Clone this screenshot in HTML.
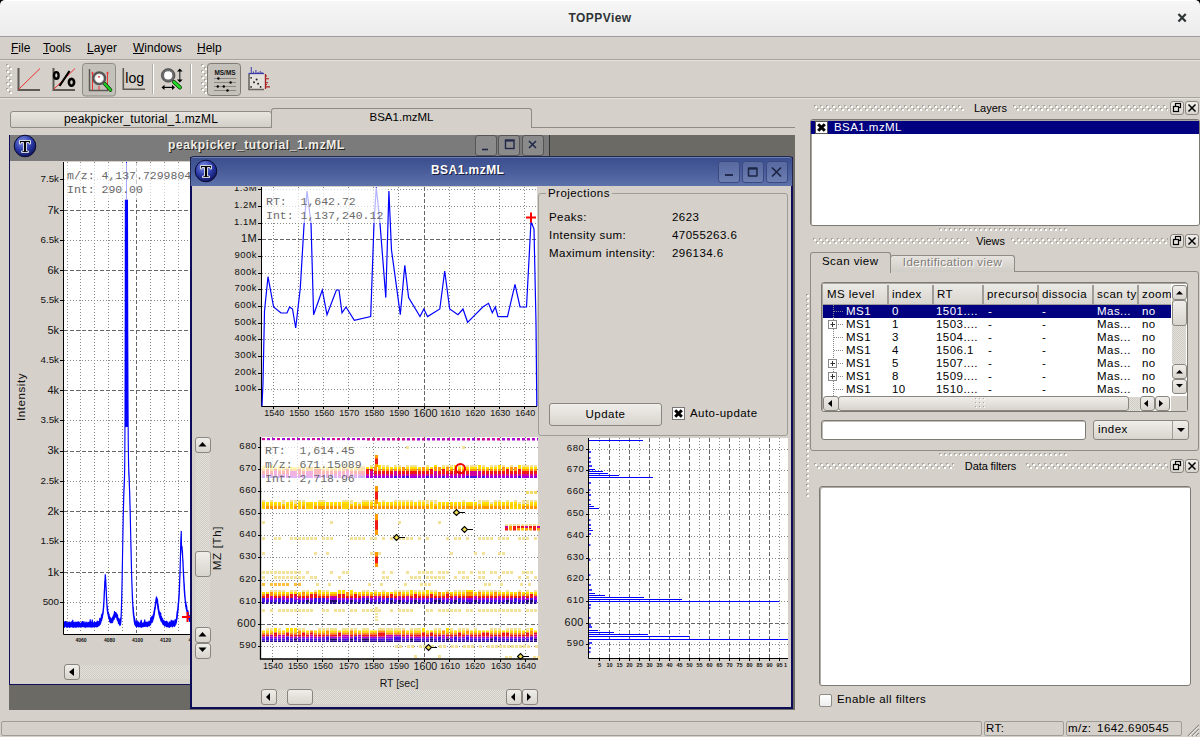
<!DOCTYPE html>
<html><head><meta charset="utf-8">
<style>
*{margin:0;padding:0;box-sizing:border-box}
html,body{width:1200px;height:737px;overflow:hidden;background:#d5d0ca;font-family:"Liberation Sans",sans-serif;font-size:11px;color:#000}
.a{position:absolute}
.t{position:absolute;white-space:nowrap;line-height:1;letter-spacing:0.45px}
.mono{letter-spacing:0}
.mono{font-family:"Liberation Mono",monospace}
.btn{position:absolute;border:1px solid #8a867f;border-radius:3px;background:linear-gradient(#f0eeea,#d8d4ce)}
.dots{position:absolute;background-image:radial-gradient(circle at 1px 1px,#fff 0.9px,transparent 1.1px),radial-gradient(circle at 1px 1px,#a9a59e 0.9px,transparent 1.1px);background-size:4px 4px,4px 4px;background-position:0 2px,2px 0}
.hatch{position:absolute;background-color:#e4e1dc;background-image:linear-gradient(45deg,#cfcbc5 25%,transparent 25%,transparent 75%,#cfcbc5 75%),linear-gradient(45deg,#cfcbc5 25%,transparent 25%,transparent 75%,#cfcbc5 75%);background-size:2px 2px;background-position:0 0,1px 1px}
</style></head><body>
<svg class="a" style="left:0;top:0" width="0" height="0"><defs>
<pattern id="d6" width="6" height="6" patternUnits="userSpaceOnUse"><path d="M0 0h2v1h-1v1h-1z M3 3h2v1h-1v1h-1z" fill="#a9a59f"/><path d="M1 1h2v2h-2z M4 4h2v2h-2z" fill="#fff"/></pattern>
<pattern id="d5" width="5" height="5" patternUnits="userSpaceOnUse"><path d="M0 0h2v1h-1v1h-1z" fill="#a9a59f"/><path d="M1 1h2v2h-2z" fill="#fff"/></pattern>
<pattern id="d4" width="4" height="4" patternUnits="userSpaceOnUse"><path d="M0 0h1v1h-1z" fill="#a9a59f"/><path d="M1 1h1v1h-1z" fill="#fff"/></pattern>
</defs></svg>

<!-- Window title bar -->
<div class="a" style="left:0;top:0;width:1200px;height:8px;background:#000"></div>
<div class="a" style="left:0;top:0;width:1200px;height:37px;background:linear-gradient(#f6f6f6,#ececec);border-bottom:1px solid #9c9c9c;border-top:1px solid #fff;border-radius:5px 5px 0 0"></div>
<div class="t" style="left:0;top:12px;width:1200px;text-align:center;font-weight:bold;font-size:12px;color:#2e3436">TOPPView</div>
<svg class="a" style="left:1170px;top:8px" width="24" height="20"><path d="M9.2 6.8 L15 12.8 M15 6.8 L9.2 12.8" stroke="#2e3436" stroke-width="2.2" stroke-linecap="square"/></svg>

<!-- menubar -->
<div class="a" style="left:0;top:59px;width:1200px;height:1px;background:#a6a29c"></div>
<div class="a" style="left:0;top:60px;width:1200px;height:1px;background:#e6e3de"></div>
<div class="t" style="left:11px;top:42px;font-size:12px;letter-spacing:0"><u>F</u>ile</div>
<div class="t" style="left:43px;top:42px;font-size:12px;letter-spacing:0"><u>T</u>ools</div>
<div class="t" style="left:87px;top:42px;font-size:12px;letter-spacing:0"><u>L</u>ayer</div>
<div class="t" style="left:133px;top:42px;font-size:12px;letter-spacing:0"><u>W</u>indows</div>
<div class="t" style="left:197px;top:42px;font-size:12px;letter-spacing:0"><u>H</u>elp</div>

<!-- toolbar -->
<div class="a" style="left:0;top:97px;width:1200px;height:1px;background:#a6a29c"></div>
<div class="a" style="left:0;top:98px;width:1200px;height:1px;background:#e6e3de"></div>


<!-- toolbar icons -->
<svg class="a" style="left:6px;top:64px" width="6" height="30" shape-rendering="crispEdges"><rect width="6" height="30" fill="url(#d6)"/></svg>
<svg class="a" style="left:0;top:0" width="280" height="100" viewBox="0 0 280 100">
  <!-- icon1 linear -->
  <path d="M18.5 68 V90 H40" fill="none" stroke="#5e5a55" stroke-width="2"/>
  <path d="M18.5 89.5 L40 68.5" stroke="#ee3030" stroke-width="1"/>
  <!-- icon2 percent -->
  <path d="M53.5 68 V90 H75" fill="none" stroke="#5e5a55" stroke-width="2"/>
  <path d="M53.5 89.5 L75 68.5" stroke="#ee3030" stroke-width="1"/>
  <ellipse cx="56.3" cy="75.4" rx="2.3" ry="3.3" fill="none" stroke="#000" stroke-width="2.4"/>
  <ellipse cx="71.5" cy="82.3" rx="2.6" ry="3.4" fill="none" stroke="#000" stroke-width="2.6"/>
  <path d="M59.5 86 L69.5 71" stroke="#000" stroke-width="2.2"/>
  <!-- icon3 pressed button -->
  <rect x="82.5" y="63.5" width="33" height="32.5" rx="3" fill="#c4c0ba" stroke="#8f8b85"/>
  <path d="M89.5 69 V90.5 H108" fill="none" stroke="#5e5a55" stroke-width="1.5"/>
  <path d="M92.5 72.5 V90 M107.5 72.5 V90 M99 86 V90" stroke="#ee3030" stroke-width="1"/>
  <path d="M91 73.5 L92.5 71.5 L94 73.5Z M106 73.5 L107.5 71.5 L109 73.5Z" fill="#ee3030"/>
  <path d="M104.5 83.5 L110.5 90" stroke="#003300" stroke-width="3.6" stroke-linecap="round"/>
  <path d="M104.5 83.5 L110.5 90" stroke="#22cc22" stroke-width="2.4" stroke-linecap="round"/>
  <circle cx="99.2" cy="78.3" r="5.8" fill="#fff" stroke="#555" stroke-width="2.4"/>
  <circle cx="99.2" cy="78.3" r="4.4" fill="none" stroke="#aaa" stroke-width="0.6"/>
  <circle cx="99" cy="76.8" r="0.9" fill="#cc2020"/>
  <!-- icon4 log -->
  <path d="M123.3 68 V89.2 H145" fill="none" stroke="#5e5a55" stroke-width="1.6"/>
  <text x="125.3" y="83.4" font-family="Liberation Sans" font-size="14" fill="#000">log</text>
  <!-- separator -->
  <path d="M152.5 64 V94" stroke="#b0aca6" stroke-width="1"/><path d="M153.5 64 V94" stroke="#fff" stroke-width="1"/>
  <!-- icon5 zoom -->
  <path d="M174 82 L180 87.5" stroke="#003300" stroke-width="3.8" stroke-linecap="round"/>
  <path d="M174 82 L180 87.5" stroke="#22dd22" stroke-width="2.4" stroke-linecap="round"/>
  <circle cx="168.2" cy="75.4" r="5.5" fill="#fff" stroke="#6a6a6a" stroke-width="2.8"/>
  <circle cx="168.2" cy="75.4" r="6.8" fill="none" stroke="#333" stroke-width="0.6"/>
  <path d="M179.8 70.5 V80.5" stroke="#333" stroke-width="1.2"/>
  <path d="M177 71.5 L179.8 68.5 L182.6 71.5Z M177 79.5 L179.8 82.5 L182.6 79.5Z" fill="#000"/>
  <path d="M163 87.4 H173.5" stroke="#000" stroke-width="1.2"/>
  <path d="M164.5 84.8 L161.5 87.4 L164.5 90Z M172 84.8 L175 87.4 L172 90Z" fill="#000"/>
  <path d="M190.5 64 V94" stroke="#b0aca6" stroke-width="1"/><path d="M191.5 64 V94" stroke="#fff" stroke-width="1"/>
  <!-- icon6 MS/MS -->
  <rect x="207.5" y="63.5" width="33" height="32" rx="3" fill="#c4c0ba" stroke="#7f7b75"/>
  <text x="214.5" y="75.3" font-family="Liberation Sans" font-weight="bold" font-size="6.8" textLength="21" lengthAdjust="spacingAndGlyphs" fill="#111">MS/MS</text>
  <path d="M214 78.5 H236 M214 82.5 H236 M214 86.5 H236 M214 90.5 H236" stroke="#8a8680" stroke-width="1"/>
  <g fill="#000"><circle cx="218.4" cy="78.5" r="1.2"/><circle cx="230.6" cy="82.5" r="1.2"/><circle cx="217.8" cy="86.5" r="1.2"/><circle cx="223.8" cy="86.5" r="1.2"/><circle cx="227.5" cy="90.5" r="1.2"/></g>
  <!-- icon7 -->
  <rect x="248.5" y="74.5" width="15.5" height="15" fill="#e4e1dc"/>
  <path d="M249 74 V89.5 H264" fill="none" stroke="#6a6661" stroke-width="1.6"/>
  <path d="M248.5 73.5 H264" stroke="#3a3aaa" stroke-width="1.2"/>
  <path d="M251.3 73 V67 M253.5 73 V71.5 M255.9 73 V70 M258 73 V72 M260.2 73 V71 M262 73 V72" stroke="#4a4ab0" stroke-width="1.1"/>
  <path d="M265.5 74 V89" stroke="#aa2020" stroke-width="1.2"/>
  <path d="M265.5 78.7 H269 M265.5 82.8 H268 M265.5 86.9 H270 M265.5 76 H267 M265.5 84.5 H267" stroke="#aa2020" stroke-width="1.1"/>
  <g fill="#222"><circle cx="251.1" cy="77.8" r="0.9"/><circle cx="256.6" cy="79.4" r="1"/><circle cx="254" cy="82.2" r="1"/><circle cx="258.1" cy="83.8" r="1"/><circle cx="251.1" cy="86.9" r="0.9"/><circle cx="260.6" cy="86.9" r="0.9"/></g>
</svg>
<svg class="a" style="left:201px;top:64px" width="6" height="30" shape-rendering="crispEdges"><rect width="6" height="30" fill="url(#d6)"/></svg>

<!-- tab bar -->
<div class="a" style="left:10px;top:111px;width:262px;height:17px;border:1px solid #8f8b85;border-radius:3px 3px 2px 2px;background:linear-gradient(#e8e5e0,#d2cec8)"></div>
<div class="t" style="left:10px;top:113px;width:262px;text-align:center;font-size:12px;letter-spacing:0.15px">peakpicker_tutorial_1.mzML</div>
<div class="a" style="left:271px;top:108px;width:261px;height:20px;border:1px solid #8f8b85;border-bottom:none;border-radius:3px 3px 0 0;background:#d5d0ca"></div>
<div class="t" style="left:271px;top:112px;width:261px;text-align:center;font-size:11.5px;letter-spacing:0">BSA1.mzML</div>
<div class="a" style="left:531px;top:127px;width:264px;height:1px;background:#8f8b85"></div>

<!-- MDI area -->
<div class="a" style="left:9px;top:135px;width:786px;height:575px;background:#6b6a65"></div>


<!-- peakpicker window -->
<div class="a" style="left:9px;top:135px;width:541px;height:550px;background:#d5d0ca;border:1px solid #10105a;border-top:none"></div>
<div class="a" style="left:10px;top:135px;width:539px;height:26px;background:#7b7b7b"></div>
<svg class="a" style="left:13px;top:134px" width="24" height="24" viewBox="0 0 24 24">
 <defs><radialGradient id="tg" cx="0.4" cy="0.3" r="0.7"><stop offset="0" stop-color="#7f8fe0"/><stop offset="0.6" stop-color="#2a3aa8"/><stop offset="1" stop-color="#101860"/></radialGradient></defs>
 <circle cx="12" cy="12" r="10.8" fill="url(#tg)" stroke="#0a0a30" stroke-width="1"/>
 <path d="M6.5 6.5 H17.5 V10 H16 V8.5 H13.5 V17 H15.5 V18.5 H8.5 V17 H10.5 V8.5 H8 V10 H6.5 Z" fill="#000" stroke="#fff" stroke-width="0.8"/>
</svg>
<div class="t" style="left:168px;top:139px;font-weight:bold;font-size:12px;letter-spacing:0.62px;color:#f0ede6;text-shadow:1px 1px 0 #222">peakpicker_tutorial_1.mzML</div>
<div class="a" style="left:475px;top:135px;width:22px;height:21px;background:#8b8b8b;border:1px solid #555;border-radius:3px"></div>
<div class="a" style="left:498px;top:135px;width:22px;height:21px;background:#8b8b8b;border:1px solid #555;border-radius:3px"></div>
<div class="a" style="left:522px;top:135px;width:22px;height:21px;background:#8b8b8b;border:1px solid #555;border-radius:3px"></div>
<svg class="a" style="left:475px;top:135px" width="70" height="22" viewBox="0 0 70 22">
 <path d="M7 14.5 H13" stroke="#20284a" stroke-width="1.6"/>
 <rect x="30.5" y="5" width="8.5" height="8.5" fill="none" stroke="#20284a" stroke-width="1.4"/>
 <path d="M30.5 5.8 H39" stroke="#20284a" stroke-width="1.5"/>
 <path d="M54 6 L61 13 M61 6 L54 13" stroke="#20284a" stroke-width="1.5"/>
</svg>
<div class="a" style="left:549px;top:135px;width:1px;height:26px;background:#333"></div>

<!-- peakpicker plot -->
<div class="a" style="left:64px;top:162px;width:130px;height:472px;background:#fff"></div>
<svg class="a" style="left:0;top:0" width="195" height="700" viewBox="0 0 195 700">
 <defs><clipPath id="ppclip"><rect x="64" y="199" width="131" height="435"/></clipPath></defs>
 <g stroke="#888" stroke-width="1" stroke-dasharray="1 2">
  <path d="M67.5 162 V633 M80.5 162 V633 M94.5 162 V633 M108.5 162 V633 M122.5 162 V633 M150.5 162 V633 M164.5 162 V633 M178.5 162 V633"/>
  <path d="M64 179.5 H195 M64 240.5 H195 M64 300.5 H195 M64 360.5 H195 M64 420.5 H195 M64 481.5 H195 M64 541.5 H195 M64 602.5 H195"/>
 </g>
 <g stroke="#666" stroke-width="1" stroke-dasharray="4 2">
  <path d="M136.5 162 V633"/>
  <path d="M64 210.5 H195 M64 270.5 H195 M64 330.5 H195 M64 390.5 H195 M64 451.5 H195 M64 511.5 H195 M64 572.5 H195"/>
 </g>
 <path d="M63.5 162 V634.5 H195" fill="none" stroke="#000" stroke-width="1"/>
 <g stroke="#000" stroke-width="1">
  <path d="M60 179.5 H63 M60 210.5 H63 M60 240.5 H63 M60 270.5 H63 M60 300.5 H63 M60 330.5 H63 M60 360.5 H63 M60 390.5 H63 M60 420.5 H63 M60 451.5 H63 M60 481.5 H63 M60 511.5 H63 M60 541.5 H63 M60 572.5 H63 M60 602.5 H63"/>
 </g>
 <g font-family="Liberation Sans" font-size="11" text-anchor="end" fill="#111">
  <text x="59" y="214">7k</text><text x="59" y="274">6k</text><text x="59" y="334">5k</text><text x="59" y="394">4k</text><text x="59" y="454">3k</text><text x="59" y="515">2k</text><text x="59" y="576">1k</text>
 </g>
 <g font-family="Liberation Sans" font-size="9.8" text-anchor="end" fill="#111">
  <text x="59" y="181.5">7.5k</text><text x="59" y="242.5">6.5k</text><text x="59" y="302.5">5.5k</text><text x="59" y="362.5">4.5k</text><text x="59" y="422.5">3.5k</text><text x="59" y="483.5">2.5k</text><text x="59" y="543.5">1.5k</text><text x="59" y="604.5">500</text>
 </g>
 <text x="0" y="0" transform="translate(25 397) rotate(-90)" text-anchor="middle" font-family="Liberation Sans" font-size="11.5" letter-spacing="0.6" fill="#111">Intensity</text>
 <g font-family="Liberation Sans" font-size="5" text-anchor="middle" fill="#111" font-weight="bold">
  <text x="81" y="642">4060</text><text x="109.5" y="642">4080</text><text x="137.5" y="642">4100</text><text x="165.5" y="642">4120</text><text x="190" y="642">4</text>
 </g>
 <g clip-path="url(#ppclip)"><path fill="#0000ff" stroke="#0000ff" stroke-width="1.1" stroke-linejoin="bevel" d="M64.00 622.5 L64.25 621.7 L64.50 624.1 L64.75 622.4 L65.00 622.9 L65.25 621.2 L65.50 621.7 L65.75 622.0 L66.00 621.1 L66.25 623.6 L66.50 623.4 L66.75 622.4 L67.00 622.3 L67.25 623.4 L67.50 622.2 L67.75 624.2 L68.00 623.4 L68.25 623.3 L68.50 624.0 L68.75 622.2 L69.00 622.1 L69.25 622.8 L69.50 623.7 L69.75 621.7 L70.00 622.8 L70.25 622.2 L70.50 624.1 L70.75 623.3 L71.00 623.3 L71.25 623.4 L71.50 624.0 L71.75 621.5 L72.00 621.5 L72.25 623.6 L72.50 623.0 L72.75 619.7 L73.00 623.8 L73.25 622.5 L73.50 623.0 L73.75 623.4 L74.00 621.9 L74.25 622.9 L74.50 623.4 L74.75 623.2 L75.00 622.5 L75.25 624.0 L75.50 621.9 L75.75 622.1 L76.00 622.1 L76.25 623.4 L76.50 622.3 L76.75 622.4 L77.00 622.7 L77.25 623.0 L77.50 622.0 L77.75 622.2 L78.00 621.9 L78.25 621.6 L78.50 622.8 L78.75 621.7 L79.00 622.3 L79.25 622.1 L79.50 623.1 L79.75 622.5 L80.00 623.8 L80.25 623.6 L80.50 624.1 L80.75 624.1 L81.00 623.7 L81.25 622.9 L81.50 622.6 L81.75 624.2 L82.00 623.1 L82.25 621.0 L82.50 622.7 L82.75 621.6 L83.00 622.0 L83.25 623.8 L83.50 621.6 L83.75 623.3 L84.00 623.9 L84.25 623.8 L84.50 623.2 L84.75 623.4 L85.00 621.6 L85.25 623.5 L85.50 623.1 L85.75 622.9 L86.00 623.9 L86.25 623.4 L86.50 624.2 L86.75 621.7 L87.00 623.5 L87.25 623.4 L87.50 622.5 L87.75 623.9 L88.00 622.8 L88.25 622.8 L88.50 622.2 L88.75 623.5 L89.00 621.8 L89.25 622.1 L89.50 622.3 L89.75 621.7 L90.00 621.9 L90.25 619.3 L90.50 623.0 L90.75 621.7 L91.00 622.7 L91.25 623.8 L91.50 624.0 L91.75 622.1 L92.00 622.2 L92.25 619.6 L92.50 622.5 L92.75 623.8 L93.00 623.8 L93.25 623.8 L93.50 623.9 L93.75 624.0 L94.00 621.8 L94.25 623.3 L94.50 621.7 L94.75 622.3 L95.00 622.8 L95.25 622.5 L95.50 623.5 L95.75 623.8 L96.00 622.2 L96.25 622.4 L96.50 623.9 L96.75 623.4 L97.00 623.2 L97.25 620.7 L97.50 622.1 L97.75 621.2 L98.00 623.3 L98.25 623.0 L98.50 622.5 L98.75 621.0 L99.00 621.9 L99.25 621.2 L99.50 621.4 L99.75 618.8 L100.00 617.8 L100.25 619.7 L100.50 620.6 L100.75 619.3 L101.00 619.3 L101.25 618.6 L101.50 614.2 L101.75 615.0 L102.00 615.4 L102.25 614.0 L102.50 612.8 L102.75 613.5 L103.00 611.0 L103.25 609.2 L103.50 605.4 L103.75 603.1 L104.00 597.5 L104.25 591.5 L104.50 588.5 L104.75 582.3 L105.00 579.8 L105.25 574.3 L105.50 576.3 L105.75 579.7 L106.00 585.5 L106.25 589.7 L106.50 596.1 L106.75 599.4 L107.00 604.8 L107.25 606.3 L107.50 608.1 L107.75 610.5 L108.00 612.6 L108.25 611.9 L108.50 614.6 L108.75 615.6 L109.00 613.6 L109.25 616.9 L109.50 617.9 L109.75 616.7 L110.00 617.6 L110.25 618.6 L110.50 617.6 L110.75 619.8 L111.00 619.0 L111.25 619.0 L111.50 618.8 L111.75 620.6 L112.00 618.2 L112.25 619.6 L112.50 616.7 L112.75 617.3 L113.00 618.3 L113.25 615.6 L113.50 616.6 L113.75 615.7 L114.00 613.7 L114.25 614.1 L114.50 611.1 L114.75 613.2 L115.00 613.4 L115.25 613.7 L115.50 612.1 L115.75 613.6 L116.00 612.2 L116.25 614.4 L116.50 615.1 L116.75 613.9 L117.00 614.3 L117.25 614.8 L117.50 614.7 L117.75 618.0 L118.00 619.1 L118.25 618.6 L118.50 617.9 L118.75 619.2 L119.00 619.5 L119.25 620.3 L119.50 622.3 L119.75 621.2 L120.00 622.1 L120.25 618.3 L120.50 619.4 L120.75 618.2 L121.00 616.9 L121.25 612.1 L121.50 603.0 L121.75 594.8 L122.00 583.4 L122.25 569.9 L122.50 556.4 L122.75 542.0 L123.00 526.4 L123.25 514.0 L123.50 503.5 L123.75 493.9 L124.00 487.2 L124.25 482.1 L124.50 475.0 L124.75 461.7 L125.00 421.0 L125.25 312.3 L125.50 103.9 L125.75 -189.0 L126.00 -449.3 L126.25 -524.8 L126.50 -455.5 L126.75 -306.5 L127.00 -119.4 L127.25 66.9 L127.50 220.9 L127.75 333.1 L128.00 400.6 L128.25 439.8 L128.50 458.6 L128.75 468.7 L129.00 473.5 L129.25 479.7 L129.50 487.7 L129.75 493.6 L130.00 503.7 L130.25 512.4 L130.50 524.6 L130.75 536.8 L131.00 545.0 L131.25 558.1 L131.50 568.6 L131.75 577.8 L132.00 584.6 L132.25 592.6 L132.50 596.0 L132.75 602.2 L133.00 606.4 L133.25 607.1 L133.50 611.7 L133.75 613.4 L134.00 617.0 L134.25 616.3 L134.50 618.9 L134.75 618.6 L135.00 620.7 L135.25 621.9 L135.50 621.8 L135.75 623.1 L136.00 623.5 L136.25 621.4 L136.50 621.7 L136.75 623.7 L137.00 620.2 L137.25 623.4 L137.50 622.1 L137.75 621.5 L138.00 623.9 L138.25 623.2 L138.50 621.6 L138.75 623.5 L139.00 623.8 L139.25 624.2 L139.50 622.8 L139.75 624.0 L140.00 623.2 L140.25 623.4 L140.50 621.7 L140.75 622.3 L141.00 621.5 L141.25 619.8 L141.50 622.8 L141.75 623.4 L142.00 623.8 L142.25 622.7 L142.50 624.0 L142.75 623.8 L143.00 623.5 L143.25 623.5 L143.50 623.1 L143.75 623.5 L144.00 621.8 L144.25 624.0 L144.50 621.5 L144.75 619.6 L145.00 622.2 L145.25 623.6 L145.50 624.0 L145.75 623.9 L146.00 621.7 L146.25 622.3 L146.50 622.0 L146.75 624.0 L147.00 621.5 L147.25 623.3 L147.50 623.3 L147.75 623.6 L148.00 622.0 L148.25 622.3 L148.50 622.0 L148.75 622.7 L149.00 620.8 L149.25 622.0 L149.50 622.1 L149.75 621.8 L150.00 620.8 L150.25 621.9 L150.50 621.7 L150.75 617.2 L151.00 619.6 L151.25 619.9 L151.50 620.4 L151.75 616.3 L152.00 617.2 L152.25 617.9 L152.50 616.0 L152.75 617.9 L153.00 615.0 L153.25 614.8 L153.50 615.8 L153.75 613.9 L154.00 611.3 L154.25 611.2 L154.50 609.4 L154.75 607.2 L155.00 607.3 L155.25 604.4 L155.50 602.3 L155.75 601.3 L156.00 599.0 L156.25 597.8 L156.50 596.6 L156.75 599.2 L157.00 597.9 L157.25 601.0 L157.50 599.4 L157.75 602.4 L158.00 604.5 L158.25 605.4 L158.50 607.1 L158.75 609.7 L159.00 610.3 L159.25 613.1 L159.50 611.7 L159.75 612.6 L160.00 613.6 L160.25 614.5 L160.50 612.8 L160.75 613.0 L161.00 617.5 L161.25 616.1 L161.50 617.1 L161.75 618.7 L162.00 618.0 L162.25 618.9 L162.50 618.6 L162.75 619.0 L163.00 621.2 L163.25 620.3 L163.50 621.7 L163.75 620.1 L164.00 622.4 L164.25 621.1 L164.50 621.0 L164.75 623.1 L165.00 621.0 L165.25 622.4 L165.50 623.5 L165.75 621.7 L166.00 621.2 L166.25 623.2 L166.50 620.9 L166.75 622.1 L167.00 621.9 L167.25 621.9 L167.50 622.3 L167.75 622.9 L168.00 623.4 L168.25 623.6 L168.50 623.2 L168.75 623.2 L169.00 624.1 L169.25 621.8 L169.50 621.9 L169.75 624.0 L170.00 624.0 L170.25 622.9 L170.50 621.7 L170.75 623.7 L171.00 622.0 L171.25 619.9 L171.50 622.4 L171.75 622.2 L172.00 621.8 L172.25 622.3 L172.50 623.9 L172.75 620.3 L173.00 622.8 L173.25 620.4 L173.50 623.1 L173.75 621.3 L174.00 622.8 L174.25 622.7 L174.50 622.2 L174.75 622.4 L175.00 619.2 L175.25 622.0 L175.50 621.3 L175.75 620.1 L176.00 619.3 L176.25 619.7 L176.50 618.2 L176.75 616.1 L177.00 613.0 L177.25 610.8 L177.50 611.6 L177.75 608.9 L178.00 605.9 L178.25 602.8 L178.50 601.8 L178.75 597.4 L179.00 594.5 L179.25 588.8 L179.50 583.4 L179.75 577.7 L180.00 571.5 L180.25 562.0 L180.50 552.4 L180.75 541.0 L181.00 536.3 L181.25 530.9 L181.50 545.8 L181.75 546.1 L182.00 546.4 L182.25 550.2 L182.50 551.7 L182.75 558.1 L183.00 560.4 L183.25 568.0 L183.50 571.4 L183.75 576.4 L184.00 581.2 L184.25 584.6 L184.50 589.1 L184.75 592.3 L185.00 596.0 L185.25 599.3 L185.50 601.8 L185.75 601.2 L186.00 603.3 L186.25 605.6 L186.50 605.5 L186.75 606.3 L187.00 609.9 L187.25 610.3 L187.50 611.1 L187.75 610.2 L188.00 611.7 L188.25 612.1 L188.50 615.1 L188.75 614.6 L189.00 615.9 L189.25 615.3 L189.50 616.6 L189.75 618.1 L190.00 617.7 L190.00 621.7 L189.75 621.4 L189.50 620.2 L189.25 620.0 L189.00 619.2 L188.75 618.9 L188.50 617.5 L188.25 617.1 L188.00 615.9 L187.75 615.2 L187.50 613.5 L187.25 613.4 L187.00 611.7 L186.75 610.7 L186.50 609.7 L186.25 609.2 L186.00 607.3 L185.75 606.8 L185.50 604.1 L185.25 601.6 L185.00 599.0 L184.75 596.8 L184.50 594.2 L184.25 590.6 L184.00 586.0 L183.75 580.1 L183.50 576.4 L183.25 571.5 L183.00 564.8 L182.75 559.8 L182.50 556.0 L182.25 553.6 L182.00 550.1 L181.75 547.9 L181.50 549.1 L181.25 535.1 L181.00 539.4 L180.75 547.1 L180.50 555.8 L180.25 565.6 L180.00 575.1 L179.75 581.6 L179.50 588.9 L179.25 594.3 L179.00 598.7 L178.75 602.2 L178.50 604.2 L178.25 608.1 L178.00 610.7 L177.75 612.1 L177.50 613.8 L177.25 617.0 L177.00 619.0 L176.75 619.9 L176.50 621.5 L176.25 623.1 L176.00 623.1 L175.75 624.3 L175.50 625.2 L175.25 625.0 L175.00 624.9 L174.75 625.5 L174.50 626.5 L174.25 626.3 L174.00 625.2 L173.75 625.4 L173.50 625.8 L173.25 625.8 L173.00 625.9 L172.75 626.3 L172.50 627.2 L172.25 626.5 L172.00 626.1 L171.75 626.1 L171.50 625.6 L171.25 625.9 L171.00 626.1 L170.75 626.4 L170.50 626.6 L170.25 626.4 L170.00 627.0 L169.75 625.5 L169.50 627.3 L169.25 627.4 L169.00 626.3 L168.75 626.0 L168.50 626.6 L168.25 627.1 L168.00 626.9 L167.75 626.0 L167.50 626.8 L167.25 626.6 L167.00 627.1 L166.75 626.6 L166.50 626.7 L166.25 626.0 L166.00 626.4 L165.75 625.3 L165.50 625.4 L165.25 625.2 L165.00 624.8 L164.75 626.4 L164.50 625.5 L164.25 625.3 L164.00 625.3 L163.75 624.6 L163.50 624.2 L163.25 624.5 L163.00 624.3 L162.75 623.7 L162.50 623.1 L162.25 622.1 L162.00 622.6 L161.75 620.7 L161.50 621.4 L161.25 621.3 L161.00 621.1 L160.75 619.6 L160.50 619.6 L160.25 617.8 L160.00 618.3 L159.75 616.8 L159.50 616.2 L159.25 615.1 L159.00 614.8 L158.75 612.4 L158.50 611.6 L158.25 609.8 L158.00 609.2 L157.75 606.9 L157.50 604.3 L157.25 603.1 L157.00 602.9 L156.75 602.0 L156.50 601.0 L156.25 601.2 L156.00 602.3 L155.75 604.8 L155.50 606.5 L155.25 608.0 L155.00 609.7 L154.75 610.9 L154.50 613.0 L154.25 614.7 L154.00 615.7 L153.75 617.5 L153.50 618.4 L153.25 619.2 L153.00 619.1 L152.75 621.4 L152.50 620.6 L152.25 621.4 L152.00 622.9 L151.75 621.9 L151.50 622.7 L151.25 622.5 L151.00 623.2 L150.75 623.8 L150.50 625.0 L150.25 624.2 L150.00 625.7 L149.75 624.6 L149.50 624.8 L149.25 626.1 L149.00 625.9 L148.75 625.8 L148.50 625.1 L148.25 625.8 L148.00 625.3 L147.75 626.4 L147.50 625.9 L147.25 627.1 L147.00 625.6 L146.75 626.4 L146.50 626.0 L146.25 625.6 L146.00 625.5 L145.75 626.7 L145.50 625.6 L145.25 625.7 L145.00 626.7 L144.75 625.7 L144.50 626.5 L144.25 626.6 L144.00 625.8 L143.75 626.4 L143.50 626.0 L143.25 626.7 L143.00 627.0 L142.75 626.0 L142.50 626.2 L142.25 626.4 L142.00 626.5 L141.75 627.2 L141.50 627.3 L141.25 627.0 L141.00 625.8 L140.75 627.4 L140.50 626.6 L140.25 626.8 L140.00 625.5 L139.75 625.6 L139.50 627.1 L139.25 626.3 L139.00 626.9 L138.75 627.0 L138.50 626.6 L138.25 626.7 L138.00 626.2 L137.75 625.7 L137.50 626.5 L137.25 626.2 L137.00 626.3 L136.75 627.2 L136.50 626.5 L136.25 625.2 L136.00 626.7 L135.75 625.6 L135.50 625.7 L135.25 624.4 L135.00 625.2 L134.75 623.9 L134.50 622.8 L134.25 621.8 L134.00 619.2 L133.75 616.5 L133.50 616.0 L133.25 613.1 L133.00 609.8 L132.75 604.8 L132.50 602.1 L132.25 595.4 L132.00 588.0 L131.75 580.1 L131.50 571.1 L131.25 561.8 L131.00 549.9 L130.75 538.7 L130.50 527.8 L130.25 516.4 L130.00 507.2 L129.75 497.7 L129.50 490.1 L129.25 483.6 L129.00 477.5 L128.75 472.0 L128.50 462.1 L128.25 442.4 L128.00 404.6 L127.75 335.3 L127.50 225.0 L127.25 71.9 L127.00 -114.5 L126.75 -303.5 L126.50 -452.8 L126.25 -522.9 L126.00 -445.2 L125.75 -185.5 L125.50 109.5 L125.25 319.2 L125.00 425.3 L124.75 465.0 L124.50 479.2 L124.25 486.1 L124.00 490.5 L123.75 498.0 L123.50 508.0 L123.25 517.5 L123.00 531.4 L122.75 545.4 L122.50 559.2 L122.25 574.5 L122.00 586.5 L121.75 599.7 L121.50 607.5 L121.25 615.1 L121.00 620.6 L120.75 622.9 L120.50 624.7 L120.25 625.4 L120.00 624.7 L119.75 625.5 L119.50 624.5 L119.25 624.0 L119.00 624.1 L118.75 623.5 L118.50 623.7 L118.25 622.0 L118.00 621.3 L117.75 620.4 L117.50 620.3 L117.25 620.0 L117.00 619.1 L116.75 617.5 L116.50 616.7 L116.25 617.1 L116.00 616.6 L115.75 617.2 L115.50 616.2 L115.25 616.2 L115.00 616.3 L114.75 617.8 L114.50 616.5 L114.25 618.6 L114.00 619.5 L113.75 619.7 L113.50 619.7 L113.25 619.7 L113.00 620.9 L112.75 621.6 L112.50 622.7 L112.25 622.2 L112.00 623.0 L111.75 622.7 L111.50 622.2 L111.25 622.3 L111.00 622.6 L110.75 622.6 L110.50 622.9 L110.25 622.4 L110.00 621.8 L109.75 621.9 L109.50 620.1 L109.25 619.5 L109.00 618.1 L108.75 618.3 L108.50 616.8 L108.25 615.9 L108.00 614.4 L107.75 613.4 L107.50 611.9 L107.25 610.4 L107.00 607.1 L106.75 602.8 L106.50 599.5 L106.25 593.1 L106.00 588.1 L105.75 584.9 L105.50 581.0 L105.25 579.7 L105.00 582.3 L104.75 585.2 L104.50 591.9 L104.25 596.2 L104.00 602.5 L103.75 606.9 L103.50 609.0 L103.25 611.9 L103.00 614.1 L102.75 615.0 L102.50 616.5 L102.25 618.5 L102.00 618.2 L101.75 620.2 L101.50 620.3 L101.25 620.8 L101.00 621.5 L100.75 623.4 L100.50 622.5 L100.25 623.6 L100.00 624.9 L99.75 624.4 L99.50 623.9 L99.25 625.6 L99.00 625.4 L98.75 626.2 L98.50 625.0 L98.25 626.1 L98.00 625.7 L97.75 626.8 L97.50 625.4 L97.25 627.2 L97.00 625.4 L96.75 626.3 L96.50 626.6 L96.25 626.8 L96.00 626.9 L95.75 626.2 L95.50 626.5 L95.25 626.6 L95.00 626.6 L94.75 626.8 L94.50 625.6 L94.25 626.5 L94.00 626.4 L93.75 627.0 L93.50 625.6 L93.25 625.6 L93.00 626.3 L92.75 627.3 L92.50 626.9 L92.25 625.9 L92.00 627.5 L91.75 625.6 L91.50 627.1 L91.25 627.1 L91.00 626.2 L90.75 626.5 L90.50 627.1 L90.25 626.9 L90.00 626.1 L89.75 626.3 L89.50 626.5 L89.25 626.7 L89.00 625.5 L88.75 627.3 L88.50 625.6 L88.25 626.2 L88.00 626.1 L87.75 626.1 L87.50 627.0 L87.25 626.4 L87.00 627.5 L86.75 626.0 L86.50 626.0 L86.25 627.2 L86.00 626.4 L85.75 626.5 L85.50 627.5 L85.25 626.5 L85.00 626.7 L84.75 626.3 L84.50 626.0 L84.25 627.3 L84.00 626.7 L83.75 625.5 L83.50 626.7 L83.25 626.6 L83.00 626.2 L82.75 626.3 L82.50 626.7 L82.25 625.7 L82.00 627.2 L81.75 626.1 L81.50 627.3 L81.25 626.7 L81.00 625.6 L80.75 626.1 L80.50 626.0 L80.25 626.8 L80.00 626.8 L79.75 625.6 L79.50 627.0 L79.25 626.8 L79.00 625.8 L78.75 626.9 L78.50 627.2 L78.25 626.5 L78.00 626.9 L77.75 626.2 L77.50 626.8 L77.25 626.8 L77.00 626.8 L76.75 625.5 L76.50 627.4 L76.25 627.0 L76.00 626.9 L75.75 626.8 L75.50 627.1 L75.25 627.1 L75.00 626.2 L74.75 627.4 L74.50 625.8 L74.25 626.5 L74.00 626.4 L73.75 627.5 L73.50 627.2 L73.25 625.7 L73.00 627.4 L72.75 627.2 L72.50 625.6 L72.25 627.2 L72.00 626.3 L71.75 625.6 L71.50 626.9 L71.25 625.9 L71.00 626.6 L70.75 627.3 L70.50 625.7 L70.25 627.2 L70.00 625.7 L69.75 626.2 L69.50 627.4 L69.25 627.4 L69.00 626.7 L68.75 625.5 L68.50 625.5 L68.25 626.9 L68.00 626.5 L67.75 626.2 L67.50 626.7 L67.25 625.8 L67.00 627.3 L66.75 627.4 L66.50 626.6 L66.25 627.2 L66.00 625.9 L65.75 626.7 L65.50 625.8 L65.25 626.1 L65.00 626.6 L64.75 625.7 L64.50 627.4 L64.25 627.3 L64.00 627.1Z"/></g>
 <path d="M126 162 h1 v37 h0.5 v28 h0.5 v200 h-3 v-200 h0.5 v-28 h0.5z" fill="#0000ff"/>
 <path d="M182 617 H193 M187.5 612 V622" stroke="#ff0000" stroke-width="2"/>
</svg>
<div class="t mono" style="left:64px;top:163px;font-size:11.5px;line-height:13.7px;color:#666;background:rgba(255,255,255,0.65);padding:6px 0 4px 3px">m/z: 4,137.7299804<br>Int: 290.00</div>
<!-- peakpicker scrollbar -->
<div class="btn" style="left:64px;top:664px;width:16px;height:16px"></div>
<svg class="a" style="left:64px;top:664px" width="16" height="16"><path d="M5 8 L10 4 V12 Z" fill="#000"/></svg>
<div class="hatch" style="left:80px;top:665px;width:114px;height:14px"></div>


<!-- BSA1 window -->
<div class="a" style="left:190px;top:157px;width:604px;height:553px;background:#6b6a65"></div>
<div class="a" style="left:190px;top:157px;width:603px;height:552px;background:#d5d0ca;border:2px solid #0c0c58;border-top:none;border-right-width:2px"></div>
<div class="a" style="left:190px;top:156px;width:603px;height:30px;background:#23284a;border-radius:4px 4px 0 0"></div>
<div class="a" style="left:191px;top:157px;width:601px;height:29px;background:linear-gradient(#3b4f8f,#4a5e9c 50%,#5d71aa);border-top:1px solid #6c80b8;border-radius:3px 3px 0 0"></div>
<svg class="a" style="left:194px;top:159px" width="24" height="24" viewBox="0 0 24 24">
 <circle cx="12" cy="12" r="10.8" fill="url(#tg)" stroke="#0a0a30" stroke-width="1"/>
 <path d="M6.5 6.5 H17.5 V10 H16 V8.5 H13.5 V17 H15.5 V18.5 H8.5 V17 H10.5 V8.5 H8 V10 H6.5 Z" fill="#000" stroke="#fff" stroke-width="0.8"/>
</svg>
<div class="t" style="left:431px;top:164px;font-weight:bold;font-size:12px;color:#fff;text-shadow:1px 1px 0 #1a1a3a">BSA1.mzML</div>
<div class="a" style="left:718px;top:161px;width:22px;height:22px;background:rgba(255,255,255,0.13);border:1px solid #3a4a80;border-radius:3px"></div>
<div class="a" style="left:742px;top:161px;width:22px;height:22px;background:rgba(255,255,255,0.13);border:1px solid #3a4a80;border-radius:3px"></div>
<div class="a" style="left:766px;top:161px;width:22px;height:22px;background:rgba(255,255,255,0.13);border:1px solid #3a4a80;border-radius:3px"></div>
<svg class="a" style="left:718px;top:161px" width="70" height="22" viewBox="0 0 70 22">
 <path d="M7 14 H15" stroke="#1c2444" stroke-width="1.8"/>
 <rect x="30.5" y="7" width="8.5" height="8" rx="0.5" fill="none" stroke="#1c2444" stroke-width="1.5"/>
 <path d="M30.5 7.8 H39" stroke="#1c2444" stroke-width="1.6"/>
 <path d="M54 6.5 L63 15.5 M63 6.5 L54 15.5" stroke="#1c2444" stroke-width="1.7"/>
</svg>

<!-- upper RT projection plot -->
<div class="a" style="left:262px;top:187px;width:275px;height:219px;background:#fff"></div>
<svg class="a" style="left:190px;top:180px" width="360" height="245" viewBox="190 180 360 245">
 <defs><clipPath id="upclip"><rect x="190" y="187" width="360" height="240"/></clipPath></defs>
 <g stroke="#888" stroke-width="1" stroke-dasharray="1 2">
  <path d="M273.5 187 V406 M298.5 187 V406 M323.5 187 V406 M348.5 187 V406 M373.5 187 V406 M398.5 187 V406 M449.5 187 V406 M474.5 187 V406 M499.5 187 V406 M524.5 187 V406"/>
  <path d="M262 189.5 H537 M262 206.5 H537 M262 223.5 H537 M262 256.5 H537 M262 273.5 H537 M262 289.5 H537 M262 306.5 H537 M262 323.5 H537 M262 339.5 H537 M262 356.5 H537 M262 373.5 H537 M262 389.5 H537"/>
 </g>
 <g stroke="#666" stroke-width="1" stroke-dasharray="4 2">
  <path d="M424.5 187 V406"/><path d="M262 239.5 H537"/>
 </g>
 <path d="M261.5 187 V406.5 H537" fill="none" stroke="#000" stroke-width="1"/>
 <g stroke="#000"><path d="M258 189.5 H262 M258 206.5 H262 M258 223.5 H262 M258 239.5 H262 M258 256.5 H262 M258 273.5 H262 M258 289.5 H262 M258 306.5 H262 M258 323.5 H262 M258 339.5 H262 M258 356.5 H262 M258 373.5 H262 M258 389.5 H262"/>
 <path d="M273.5 406 V409 M298.5 406 V409 M323.5 406 V409 M348.5 406 V409 M373.5 406 V409 M398.5 406 V409 M424.5 406 V409 M449.5 406 V409 M474.5 406 V409 M499.5 406 V409 M524.5 406 V409"/></g>
 <g clip-path="url(#upclip)" font-family="Liberation Sans" font-size="9.5" letter-spacing="0.45" text-anchor="end" fill="#111">
  <text x="257" y="190.6">1.3M</text><text x="257" y="207.6">1.2M</text><text x="257" y="224.6">1.1M</text><text x="257" y="257.6">900k</text><text x="257" y="274.6">800k</text><text x="257" y="290.6">700k</text><text x="257" y="307.6">600k</text><text x="257" y="324.6">500k</text><text x="257" y="340.6">400k</text><text x="257" y="357.6">300k</text><text x="257" y="374.6">200k</text><text x="257" y="390.6">100k</text>
 </g>
 <text x="257" y="242" font-family="Liberation Sans" font-size="11" letter-spacing="0.3" text-anchor="end" fill="#111">1M</text>
 <g font-family="Liberation Sans" font-size="9" text-anchor="middle" fill="#111"><text x="274.2" y="416">1540</text><text x="299.2" y="416">1550</text><text x="324.2" y="416">1560</text><text x="349.2" y="416">1570</text><text x="374.2" y="416">1580</text><text x="399.2" y="416">1590</text><text x="450.2" y="416">1610</text><text x="475.2" y="416">1620</text><text x="500.2" y="416">1630</text><text x="525.2" y="416">1640</text></g>
 <text x="425.4" y="417" font-family="Liberation Sans" font-size="10.8" text-anchor="middle" fill="#111">1600</text>
 <path fill="none" stroke="#0000ff" stroke-width="1.2" stroke-linejoin="miter" d="M262 406 L263 383 L264.5 311 L268 276.7 L273.6 307 L281 313 L287 313 L289.6 307 L292.5 309 L295.7 328 L300.3 288 L304 225.3 L307 191 L311 223 L313.6 314.7 L322.3 290 L327 314.7 L336.4 290 L339 290 L342 312.8 L346 307 L354.3 320.4 L370.7 316.6 L374 223.4 L376.3 187.3 L380 223.4 L385.8 297.6 L388.9 191 L391.5 250 L400.3 314.7 L404.8 265.3 L408.6 297.6 L420 316.6 L423.8 309 L427.6 316.6 L439.8 309 L444.7 271 L449.7 309 L458 314.7 L463 309 L467.6 322.3 L473.3 316.6 L482.8 307 L488.5 303.3 L492.3 312.8 L495.3 307 L498 316.6 L507.5 316.6 L515 284.3 L520 307 L526.5 307 L531 221.5 L534 229 L536 322.3 L536.8 406"/>
 <path d="M526 217.5 H536 M531 212.5 V222.5" stroke="#ff0000" stroke-width="2"/>
</svg>
<div class="t mono" style="left:262px;top:188px;font-size:11.5px;line-height:14px;color:#555;background:rgba(255,255,255,0.7);padding:7px 3px 0 4px;color:#6a6a6a">RT:&nbsp;&nbsp;1,642.72<br>Int: 1,137,240.12</div>

<!-- Projections groupbox -->
<div class="a" style="left:538px;top:193px;width:250px;height:243px;border:1px solid #a09c96;border-radius:3px"></div>
<div class="t" style="left:546px;top:188px;font-size:11.5px;background:#d5d0ca;padding:0 2px">Projections</div>
<div class="t" style="left:549px;top:212px;font-size:11.5px">Peaks:</div>
<div class="t" style="left:549px;top:230px;font-size:11.5px">Intensity sum:</div>
<div class="t" style="left:549px;top:248px;font-size:11.5px">Maximum intensity:</div>
<div class="t" style="left:672px;top:212px;font-size:11.5px">2623</div>
<div class="t" style="left:672px;top:230px;font-size:11.5px">47055263.6</div>
<div class="t" style="left:672px;top:248px;font-size:11.5px">296134.6</div>
<div class="btn" style="left:549px;top:403px;width:113px;height:23px"></div>
<div class="t" style="left:549px;top:409px;width:113px;text-align:center;font-size:11.5px">Update</div>
<div class="a" style="left:672px;top:407px;width:13px;height:13px;background:#fff;border:1px solid #777"></div>
<svg class="a" style="left:672px;top:407px" width="13" height="13"><path d="M3.2 3.2 L9.8 9.8 M9.8 3.2 L3.2 9.8" stroke="#000" stroke-width="3"/></svg>
<div class="t" style="left:690px;top:408px;font-size:11.5px">Auto-update</div>


<!-- 2D plot -->
<div class="a" style="left:261px;top:437px;width:277px;height:222px;background:#fff"></div>
<svg class="a" style="left:190px;top:425px" width="610" height="290" viewBox="190 425 610 290">
 <g stroke="#888" stroke-width="1" stroke-dasharray="1 2">
  <path d="M272.5 437 V659 M297.5 437 V659 M322.5 437 V659 M348.5 437 V659 M373.5 437 V659 M398.5 437 V659 M449.5 437 V659 M474.5 437 V659 M500.5 437 V659 M525.5 437 V659"/>
  <path d="M261 447.5 H538 M261 469.5 H538 M261 491.5 H538 M261 513.5 H538 M261 535.5 H538 M261 557.5 H538 M261 580.5 H538 M261 602.5 H538 M261 646.5 H538"/>
 </g>
 <g stroke="#666" stroke-width="1" stroke-dasharray="4 2">
  <path d="M424.5 437 V659"/><path d="M261 624.5 H538"/>
 </g>
<path fill="#d0009a" d="M262 438h3v2.5h-3zM277 438h3v2.5h-3zM302 438h3v2.5h-3zM312 438h3v2.5h-3zM332 438h3v2.5h-3zM337 438h3v2.5h-3zM367 438h3v2.5h-3zM372 438h3v2.5h-3zM377 438h3v2.5h-3zM392 438h3v2.5h-3zM397 438h3v2.5h-3zM402 438h3v2.5h-3zM412 438h3v2.5h-3zM422 438h3v2.5h-3zM467 438h3v2.5h-3zM477 438h3v2.5h-3zM482 438h3v2.5h-3zM487 438h3v2.5h-3zM497 438h3v2.5h-3zM262 474h3v2h-3zM266 474h3v2h-3zM270 474h3v2h-3zM274 471h3v3h-3zM274 474h3v2h-3zM278 474h3v2h-3zM282 474h3v2h-3zM286 474h3v2h-3zM290 471h7v3h-7zM290 474h7v2h-7zM298 474h3v2h-3zM302 474h3v2h-3zM306 471h7v3h-7zM306 474h7v2h-7zM314 474h7v2h-7zM322 474h3v2h-3zM326 474h3v2h-3zM330 474h3v2h-3zM334 474h3v2h-3zM338 471h3v3h-3zM338 474h3v2h-3zM342 474h3v2h-3zM346 471h3v3h-3zM346 474h3v2h-3zM350 474h3v2h-3zM354 474h3v2h-3zM358 474h7v2h-7zM366 474h3v2h-3zM370 471h3v3h-3zM370 474h3v2h-3zM374 474h3v2h-3zM378 474h3v2h-3zM382 474h3v2h-3zM386 474h3v2h-3zM390 474h3v2h-3zM394 471h3v3h-3zM394 474h3v2h-3zM398 474h3v2h-3zM402 474h3v2h-3zM406 474h3v2h-3zM410 474h7v2h-7zM418 474h3v2h-3zM422 474h3v2h-3zM426 474h3v2h-3zM430 474h3v2h-3zM434 471h3v3h-3zM434 474h3v2h-3zM438 474h3v2h-3zM442 474h3v2h-3zM446 474h3v2h-3zM450 474h3v2h-3zM454 474h3v2h-3zM458 474h3v2h-3zM462 474h3v2h-3zM466 474h3v2h-3zM470 471h7v3h-7zM470 474h7v2h-7zM478 471h3v3h-3zM478 474h3v2h-3zM482 474h3v2h-3zM486 474h3v2h-3zM490 474h3v2h-3zM494 474h3v2h-3zM498 474h3v2h-3zM502 474h3v2h-3zM506 474h3v2h-3zM510 474h3v2h-3zM514 474h3v2h-3zM518 474h3v2h-3zM522 474h7v2h-7zM530 474h3v2h-3zM534 474h3v2h-3zM270 596h3v2h-3zM282 596h3v2h-3zM294 596h3v2h-3zM330 596h7v2h-7zM362 596h3v2h-3zM366 596h3v2h-3zM374 596h3v2h-3zM378 596h3v2h-3zM398 596h3v2h-3zM406 596h3v2h-3zM454 596h3v2h-3zM474 596h3v2h-3zM498 596h3v2h-3zM522 596h3v2h-3zM534 596h3v2h-3zM270 634.5h3v2h-3zM278 634.5h3v2h-3zM282 634.5h3v2h-3zM310 634.5h3v2h-3zM342 634.5h7v2h-7zM358 634.5h3v2h-3zM386 634.5h7v2h-7zM394 634.5h7v2h-7zM406 634.5h3v2h-3zM442 634.5h3v2h-3zM466 634.5h3v2h-3zM534 634.5h3v2h-3zM505 526h3v2h-3zM525 526h3v2h-3zM537 526h3v2h-3z"/>
<path fill="#b000d0" d="M267 438h3v2.5h-3zM272 438h3v2.5h-3zM287 438h3v2.5h-3zM297 438h3v2.5h-3zM307 438h3v2.5h-3zM327 438h3v2.5h-3zM347 438h3v2.5h-3zM352 438h3v2.5h-3zM382 438h3v2.5h-3zM407 438h3v2.5h-3zM437 438h3v2.5h-3zM457 438h3v2.5h-3zM522 438h3v2.5h-3zM532 438h3v2.5h-3z"/>
<path fill="#a000e0" d="M282 438h3v2.5h-3zM322 438h3v2.5h-3zM417 438h3v2.5h-3zM427 438h3v2.5h-3zM472 438h3v2.5h-3zM502 438h3v2.5h-3zM512 438h3v2.5h-3zM537 438h1v2.5h-1zM266 476h3v2h-3zM278 476h3v2h-3zM282 476h3v2h-3zM286 476h3v2h-3zM290 476h7v2h-7zM298 476h3v2h-3zM302 476h3v2h-3zM306 476h7v2h-7zM314 476h7v2h-7zM322 476h3v2h-3zM326 476h3v2h-3zM334 476h3v2h-3zM338 476h3v2h-3zM342 476h3v2h-3zM346 476h3v2h-3zM350 476h3v2h-3zM354 476h3v2h-3zM366 476h3v2h-3zM370 476h3v2h-3zM374 476h3v2h-3zM378 476h3v2h-3zM382 476h3v2h-3zM386 476h3v2h-3zM390 476h3v2h-3zM398 476h3v2h-3zM410 476h7v2h-7zM418 476h3v2h-3zM422 476h3v2h-3zM430 476h3v2h-3zM434 476h3v2h-3zM438 476h3v2h-3zM446 476h3v2h-3zM450 476h3v2h-3zM454 476h3v2h-3zM458 476h3v2h-3zM462 476h3v2h-3zM478 476h3v2h-3zM486 476h3v2h-3zM490 476h3v2h-3zM494 476h3v2h-3zM498 476h3v2h-3zM502 476h3v2h-3zM506 476h3v2h-3zM510 476h3v2h-3zM514 476h3v2h-3zM522 476h7v2h-7zM530 476h3v2h-3zM534 476h3v2h-3zM266 598h3v2h-3zM270 598h3v2h-3zM274 598h3v2h-3zM282 598h3v2h-3zM286 598h3v2h-3zM294 598h3v2h-3zM298 598h3v2h-3zM302 598h3v2h-3zM306 598h3v2h-3zM310 598h3v2h-3zM326 598h3v2h-3zM330 598h7v2h-7zM338 598h3v2h-3zM342 598h3v2h-3zM346 598h3v2h-3zM350 598h3v2h-3zM354 598h3v2h-3zM358 598h3v2h-3zM370 598h3v2h-3zM374 598h3v2h-3zM382 598h3v2h-3zM394 598h3v2h-3zM398 598h3v2h-3zM402 598h3v2h-3zM406 598h3v2h-3zM410 598h3v2h-3zM414 598h3v2h-3zM418 598h3v2h-3zM422 598h3v2h-3zM426 598h3v2h-3zM434 598h3v2h-3zM442 598h3v2h-3zM446 598h3v2h-3zM450 598h3v2h-3zM454 598h3v2h-3zM462 598h3v2h-3zM466 598h7v2h-7zM474 598h3v2h-3zM478 598h3v2h-3zM482 598h3v2h-3zM486 598h3v2h-3zM490 598h3v2h-3zM494 598h3v2h-3zM498 598h3v2h-3zM502 598h3v2h-3zM506 598h3v2h-3zM510 598h3v2h-3zM518 598h3v2h-3zM522 598h3v2h-3zM526 598h3v2h-3zM534 598h3v2h-3zM262 636.5h3v2h-3zM270 636.5h3v2h-3zM274 636.5h3v2h-3zM278 636.5h3v2h-3zM282 636.5h3v2h-3zM290 636.5h3v2h-3zM294 636.5h3v2h-3zM298 636.5h3v2h-3zM302 636.5h3v2h-3zM306 636.5h3v2h-3zM310 636.5h3v2h-3zM314 636.5h3v2h-3zM318 636.5h3v2h-3zM322 636.5h3v2h-3zM330 636.5h7v2h-7zM338 636.5h3v2h-3zM342 636.5h7v2h-7zM350 636.5h3v2h-3zM358 636.5h3v2h-3zM362 636.5h7v2h-7zM370 636.5h7v2h-7zM378 636.5h7v2h-7zM386 636.5h7v2h-7zM402 636.5h3v2h-3zM406 636.5h3v2h-3zM410 636.5h3v2h-3zM414 636.5h7v2h-7zM422 636.5h3v2h-3zM426 636.5h3v2h-3zM434 636.5h3v2h-3zM442 636.5h3v2h-3zM446 636.5h3v2h-3zM450 636.5h3v2h-3zM458 636.5h3v2h-3zM462 636.5h3v2h-3zM470 636.5h3v2h-3zM474 636.5h3v2h-3zM478 636.5h3v2h-3zM482 636.5h3v2h-3zM486 636.5h3v2h-3zM490 636.5h3v2h-3zM498 636.5h3v2h-3zM502 636.5h3v2h-3zM506 636.5h3v2h-3zM510 636.5h3v2h-3zM514 636.5h3v2h-3zM518 636.5h3v2h-3zM522 636.5h3v2h-3zM526 636.5h3v2h-3zM534 636.5h3v2h-3z"/>
<path fill="#c000c0" d="M292 438h3v2.5h-3zM317 438h3v2.5h-3zM342 438h3v2.5h-3zM357 438h3v2.5h-3zM362 438h3v2.5h-3zM387 438h3v2.5h-3zM432 438h3v2.5h-3zM442 438h3v2.5h-3zM447 438h3v2.5h-3zM452 438h3v2.5h-3zM462 438h3v2.5h-3zM492 438h3v2.5h-3zM507 438h3v2.5h-3zM517 438h3v2.5h-3zM527 438h3v2.5h-3z"/>
<path fill="#f3e39a" d="M262 465h3v2h-3zM266 465h3v2h-3zM278 465h3v2h-3zM282 465h3v2h-3zM298 465h3v2h-3zM338 465h3v2h-3zM342 465h3v2h-3zM346 465h3v2h-3zM350 465h3v2h-3zM358 465h7v2h-7zM370 465h3v2h-3zM374 465h3v2h-3zM382 465h3v2h-3zM386 465h3v2h-3zM394 465h3v2h-3zM398 465h3v2h-3zM406 465h3v2h-3zM410 465h7v2h-7zM426 465h3v2h-3zM442 465h3v2h-3zM446 465h3v2h-3zM450 465h3v2h-3zM458 465h3v2h-3zM462 465h3v2h-3zM466 465h3v2h-3zM470 465h7v2h-7zM482 465h3v2h-3zM490 465h3v2h-3zM494 465h3v2h-3zM502 465h3v2h-3zM510 465h3v2h-3zM522 465h7v2h-7zM530 465h3v2h-3zM534 465h3v2h-3zM262 500h3v2h-3zM270 500h3v2h-3zM282 500h3v2h-3zM282 502h3v2h-3zM290 500h3v2h-3zM294 500h3v2h-3zM294 502h3v2h-3zM298 500h3v2h-3zM302 500h3v2h-3zM318 500h7v2h-7zM342 500h7v2h-7zM350 500h3v2h-3zM350 502h3v2h-3zM358 502h3v2h-3zM362 500h7v2h-7zM370 500h3v2h-3zM374 500h3v2h-3zM382 500h3v2h-3zM394 500h3v2h-3zM398 500h3v2h-3zM402 500h3v2h-3zM406 500h3v2h-3zM410 500h3v2h-3zM418 500h3v2h-3zM422 500h3v2h-3zM426 500h3v2h-3zM426 502h3v2h-3zM430 500h3v2h-3zM434 500h3v2h-3zM434 502h3v2h-3zM462 500h3v2h-3zM478 500h3v2h-3zM478 502h3v2h-3zM482 500h7v2h-7zM490 502h3v2h-3zM494 500h3v2h-3zM498 500h3v2h-3zM506 500h3v2h-3zM514 500h3v2h-3zM518 502h3v2h-3zM522 500h3v2h-3zM522 502h3v2h-3zM526 500h3v2h-3zM526 502h3v2h-3zM530 500h3v2h-3zM534 500h3v2h-3zM270 590h3v2h-3zM274 590h3v2h-3zM278 590h3v2h-3zM282 590h3v2h-3zM290 590h3v2h-3zM294 590h3v2h-3zM302 590h3v2h-3zM306 590h3v2h-3zM314 590h3v2h-3zM322 590h3v2h-3zM326 590h3v2h-3zM362 590h3v2h-3zM366 590h3v2h-3zM374 590h3v2h-3zM382 590h3v2h-3zM394 590h3v2h-3zM398 590h3v2h-3zM402 590h3v2h-3zM406 590h3v2h-3zM414 590h3v2h-3zM418 590h3v2h-3zM422 590h3v2h-3zM430 590h3v2h-3zM434 590h3v2h-3zM446 590h3v2h-3zM454 590h3v2h-3zM458 590h3v2h-3zM462 590h3v2h-3zM478 590h3v2h-3zM482 590h3v2h-3zM486 590h3v2h-3zM490 590h3v2h-3zM494 590h3v2h-3zM498 590h3v2h-3zM506 590h3v2h-3zM518 590h3v2h-3zM526 590h3v2h-3zM534 590h3v2h-3zM266 628h3v2.5h-3zM270 628h3v2.5h-3zM278 628h3v2.5h-3zM298 628h3v2.5h-3zM302 628h3v2.5h-3zM318 628h3v2.5h-3zM322 628h3v2.5h-3zM326 628h3v2.5h-3zM330 628h7v2.5h-7zM342 628h7v2.5h-7zM350 628h3v2.5h-3zM354 628h3v2.5h-3zM362 628h7v2.5h-7zM378 628h7v2.5h-7zM386 628h7v2.5h-7zM394 628h7v2.5h-7zM402 628h3v2.5h-3zM410 628h3v2.5h-3zM414 628h7v2.5h-7zM434 628h3v2.5h-3zM438 628h3v2.5h-3zM450 628h3v2.5h-3zM458 628h3v2.5h-3zM462 628h3v2.5h-3zM466 628h3v2.5h-3zM474 628h3v2.5h-3zM490 628h3v2.5h-3zM494 628h3v2.5h-3zM498 628h3v2.5h-3zM506 628h3v2.5h-3zM510 628h3v2.5h-3zM514 628h3v2.5h-3zM518 628h3v2.5h-3zM526 628h3v2.5h-3zM375 607h3v2h-3zM375 610h3v2h-3zM375 613h3v2h-3zM375 616h3v2h-3zM375 619h3v2h-3zM262 537h3v3h-3zM274 537h3v3h-3zM278 537h3v3h-3zM290 537h3v3h-3zM294 537h3v3h-3zM298 537h3v3h-3zM302 537h3v3h-3zM306 537h3v3h-3zM310 537h3v3h-3zM314 537h3v3h-3zM322 537h3v3h-3zM326 537h3v3h-3zM330 537h3v3h-3zM350 537h3v3h-3zM354 537h3v3h-3zM358 537h3v3h-3zM362 537h3v3h-3zM370 537h3v3h-3zM374 537h3v3h-3zM382 537h3v3h-3zM390 537h3v3h-3zM394 537h3v3h-3zM398 537h3v3h-3zM402 537h3v3h-3zM406 537h3v3h-3zM410 537h3v3h-3zM418 537h3v3h-3zM426 537h3v3h-3zM446 537h3v3h-3zM454 537h3v3h-3zM458 537h3v3h-3zM466 537h3v3h-3zM478 537h3v3h-3zM482 537h3v3h-3zM486 537h3v3h-3zM490 537h3v3h-3zM498 537h3v3h-3zM502 537h3v3h-3zM506 537h3v3h-3zM518 537h3v3h-3zM522 537h3v3h-3zM526 537h3v3h-3zM534 537h3v3h-3zM266 571h3v3h-3zM270 571h3v3h-3zM278 571h3v3h-3zM282 571h3v3h-3zM290 571h3v3h-3zM298 571h3v3h-3zM306 571h3v3h-3zM330 571h3v3h-3zM342 571h3v3h-3zM346 571h3v3h-3zM382 571h3v3h-3zM390 571h3v3h-3zM406 571h3v3h-3zM418 571h3v3h-3zM422 571h3v3h-3zM426 571h3v3h-3zM430 571h3v3h-3zM438 571h3v3h-3zM442 571h3v3h-3zM446 571h3v3h-3zM458 571h3v3h-3zM462 571h3v3h-3zM470 571h3v3h-3zM478 571h3v3h-3zM482 571h3v3h-3zM490 571h3v3h-3zM494 571h3v3h-3zM502 571h3v3h-3zM506 571h3v3h-3zM510 571h3v3h-3zM522 571h3v3h-3zM526 571h3v3h-3zM530 571h3v3h-3zM274 576h3v3h-3zM290 576h3v3h-3zM294 576h3v3h-3zM302 576h3v3h-3zM310 576h3v3h-3zM314 576h3v3h-3zM338 576h3v3h-3zM382 576h3v3h-3zM386 576h3v3h-3zM410 576h3v3h-3zM414 576h3v3h-3zM418 576h3v3h-3zM426 576h3v3h-3zM430 576h3v3h-3zM434 576h3v3h-3zM438 576h3v3h-3zM442 576h3v3h-3zM454 576h3v3h-3zM462 576h3v3h-3zM466 576h3v3h-3zM478 576h3v3h-3zM482 576h3v3h-3zM498 576h3v3h-3zM518 576h3v3h-3zM526 576h3v3h-3zM534 576h3v3h-3zM262 609h3v3h-3zM270 609h3v3h-3zM278 609h3v3h-3zM282 609h3v3h-3zM286 609h3v3h-3zM290 609h3v3h-3zM294 609h3v3h-3zM298 609h3v3h-3zM302 609h3v3h-3zM306 609h3v3h-3zM310 609h3v3h-3zM322 609h3v3h-3zM326 609h3v3h-3zM334 609h3v3h-3zM338 609h3v3h-3zM342 609h3v3h-3zM350 609h3v3h-3zM354 609h3v3h-3zM362 609h3v3h-3zM366 609h3v3h-3zM370 609h3v3h-3zM374 609h3v3h-3zM378 609h3v3h-3zM390 609h3v3h-3zM398 609h3v3h-3zM402 609h3v3h-3zM406 609h3v3h-3zM410 609h3v3h-3zM426 609h3v3h-3zM430 609h3v3h-3zM438 609h3v3h-3zM442 609h3v3h-3zM446 609h3v3h-3zM450 609h3v3h-3zM454 609h3v3h-3zM458 609h3v3h-3zM466 609h3v3h-3zM470 609h3v3h-3zM478 609h3v3h-3zM482 609h3v3h-3zM486 609h3v3h-3zM490 609h3v3h-3zM494 609h3v3h-3zM498 609h3v3h-3zM502 609h3v3h-3zM506 609h3v3h-3zM510 609h3v3h-3zM514 609h3v3h-3zM518 609h3v3h-3zM526 609h3v3h-3zM530 609h3v3h-3zM534 609h3v3h-3zM262 571h3v3h-3zM266 571h3v3h-3zM270 571h3v3h-3zM274 571h3v3h-3zM278 571h3v3h-3zM286 571h3v3h-3zM290 571h3v3h-3zM294 571h3v3h-3zM262 576h3v3h-3zM278 576h3v3h-3zM282 576h3v3h-3zM286 576h3v3h-3zM290 576h3v3h-3zM294 576h3v3h-3zM298 576h3v3h-3zM316 583h3v3h-3zM328 583h3v3h-3zM368 583h3v3h-3zM380 583h3v3h-3zM404 583h3v3h-3zM420 583h3v3h-3zM424 583h3v3h-3zM428 583h3v3h-3zM484 583h3v3h-3zM488 583h3v3h-3zM500 583h3v3h-3zM520 583h3v3h-3zM528 583h3v3h-3zM395 645h3v3h-3zM399 645h3v3h-3zM407 645h3v3h-3zM411 645h3v3h-3zM419 645h3v3h-3zM423 645h3v3h-3zM431 645h3v3h-3zM439 645h3v3h-3zM443 645h3v3h-3zM451 645h3v3h-3zM455 645h3v3h-3zM463 645h3v3h-3zM467 645h3v3h-3zM471 645h3v3h-3zM479 645h3v3h-3zM487 645h3v3h-3zM491 645h3v3h-3zM495 645h3v3h-3zM499 645h3v3h-3zM503 645h3v3h-3zM507 645h3v3h-3zM511 645h3v3h-3zM515 645h3v3h-3zM519 645h3v3h-3zM523 645h3v3h-3zM527 645h3v3h-3zM535 645h3v3h-3zM505 656h3v3h-3zM509 656h3v3h-3zM517 656h3v3h-3zM521 656h3v3h-3zM533 656h3v3h-3zM537 656h3v3h-3zM270 446h3v3h-3zM314 446h3v3h-3zM346 446h3v3h-3zM350 446h3v3h-3zM406 446h3v3h-3zM462 446h3v3h-3zM262 521h3v3h-3zM330 521h3v3h-3zM398 521h3v3h-3zM438 521h3v3h-3zM262 552h3v3h-3zM314 552h3v3h-3zM326 552h3v3h-3zM370 552h3v3h-3zM374 552h3v3h-3zM378 552h3v3h-3zM450 552h3v3h-3zM474 552h3v3h-3zM482 552h3v3h-3zM498 552h3v3h-3zM502 552h3v3h-3zM414 655h3v3h-3zM438 655h3v3h-3zM505 524h3v2h-3zM509 524h3v2h-3zM513 524h3v2h-3zM517 524h3v2h-3zM521 524h3v2h-3zM525 524h3v2h-3zM529 524h3v2h-3zM533 524h3v2h-3zM537 524h3v2h-3z"/>
<path fill="#ffe000" d="M262 467h3v2h-3zM266 467h3v2h-3zM270 465h3v2h-3zM270 467h3v2h-3zM274 467h3v2h-3zM278 467h3v2h-3zM282 467h3v2h-3zM286 467h3v2h-3zM290 467h7v2h-7zM298 467h3v2h-3zM302 467h3v2h-3zM314 467h7v2h-7zM322 467h3v2h-3zM326 467h3v2h-3zM330 467h3v2h-3zM334 467h3v2h-3zM338 467h3v2h-3zM346 467h3v2h-3zM350 467h3v2h-3zM354 467h3v2h-3zM366 467h3v2h-3zM370 467h3v2h-3zM378 465h3v2h-3zM378 467h3v2h-3zM382 467h3v2h-3zM386 467h3v2h-3zM390 467h3v2h-3zM394 467h3v2h-3zM398 467h3v2h-3zM406 467h3v2h-3zM410 467h7v2h-7zM418 467h3v2h-3zM426 467h3v2h-3zM430 467h3v2h-3zM434 465h3v2h-3zM442 467h3v2h-3zM450 467h3v2h-3zM454 465h3v2h-3zM454 467h3v2h-3zM458 467h3v2h-3zM462 467h3v2h-3zM466 467h3v2h-3zM470 467h7v2h-7zM478 465h3v2h-3zM478 467h3v2h-3zM482 467h3v2h-3zM486 467h3v2h-3zM490 467h3v2h-3zM494 467h3v2h-3zM498 465h3v2h-3zM498 467h3v2h-3zM506 467h3v2h-3zM518 465h3v2h-3zM518 467h3v2h-3zM522 467h7v2h-7zM530 467h3v2h-3zM534 467h3v2h-3zM262 502h3v2h-3zM266 502h3v2h-3zM270 502h3v2h-3zM274 502h3v2h-3zM278 502h3v2h-3zM286 502h3v2h-3zM290 502h3v2h-3zM298 502h3v2h-3zM302 502h3v2h-3zM306 502h7v2h-7zM314 502h3v2h-3zM318 502h7v2h-7zM326 502h3v2h-3zM330 502h3v2h-3zM334 502h3v2h-3zM338 502h3v2h-3zM342 502h7v2h-7zM354 502h3v2h-3zM362 502h7v2h-7zM370 502h3v2h-3zM374 502h3v2h-3zM378 502h3v2h-3zM382 502h3v2h-3zM386 502h3v2h-3zM390 502h3v2h-3zM394 502h3v2h-3zM398 502h3v2h-3zM402 502h3v2h-3zM406 502h3v2h-3zM410 502h3v2h-3zM414 502h3v2h-3zM418 502h3v2h-3zM422 502h3v2h-3zM430 502h3v2h-3zM438 502h3v2h-3zM442 502h3v2h-3zM446 502h3v2h-3zM450 502h3v2h-3zM454 502h3v2h-3zM458 502h3v2h-3zM462 502h3v2h-3zM466 502h7v2h-7zM474 502h3v2h-3zM482 502h7v2h-7zM494 502h3v2h-3zM498 502h3v2h-3zM502 502h3v2h-3zM506 502h3v2h-3zM510 502h3v2h-3zM514 502h3v2h-3zM530 502h3v2h-3zM534 502h3v2h-3zM262 592h3v2h-3zM266 592h3v2h-3zM274 592h3v2h-3zM278 592h3v2h-3zM282 592h3v2h-3zM286 592h3v2h-3zM290 592h3v2h-3zM294 592h3v2h-3zM298 592h3v2h-3zM306 592h3v2h-3zM310 592h3v2h-3zM318 590h3v2h-3zM318 592h3v2h-3zM322 592h3v2h-3zM326 592h3v2h-3zM330 592h7v2h-7zM338 590h3v2h-3zM338 592h3v2h-3zM342 590h3v2h-3zM342 592h3v2h-3zM350 590h3v2h-3zM350 592h3v2h-3zM354 592h3v2h-3zM358 592h3v2h-3zM362 592h3v2h-3zM366 592h3v2h-3zM370 592h3v2h-3zM374 592h3v2h-3zM378 592h3v2h-3zM382 592h3v2h-3zM386 592h3v2h-3zM390 592h3v2h-3zM394 592h3v2h-3zM402 592h3v2h-3zM406 592h3v2h-3zM410 590h3v2h-3zM410 592h3v2h-3zM414 592h3v2h-3zM418 592h3v2h-3zM422 592h3v2h-3zM426 590h3v2h-3zM426 592h3v2h-3zM430 592h3v2h-3zM434 592h3v2h-3zM442 592h3v2h-3zM450 592h3v2h-3zM454 592h3v2h-3zM458 592h3v2h-3zM462 592h3v2h-3zM466 590h7v2h-7zM474 592h3v2h-3zM482 592h3v2h-3zM486 592h3v2h-3zM490 592h3v2h-3zM498 592h3v2h-3zM502 592h3v2h-3zM506 592h3v2h-3zM510 592h3v2h-3zM514 592h3v2h-3zM522 592h3v2h-3zM526 592h3v2h-3zM530 592h3v2h-3zM534 592h3v2h-3zM262 630.5h3v2h-3zM266 630.5h3v2h-3zM270 630.5h3v2h-3zM274 628h3v2.5h-3zM274 630.5h3v2h-3zM278 630.5h3v2h-3zM282 630.5h3v2h-3zM286 628h3v2.5h-3zM286 630.5h3v2h-3zM290 628h3v2.5h-3zM290 630.5h3v2h-3zM294 628h3v2.5h-3zM294 630.5h3v2h-3zM302 630.5h3v2h-3zM306 630.5h3v2h-3zM314 630.5h3v2h-3zM318 630.5h3v2h-3zM322 630.5h3v2h-3zM330 630.5h7v2h-7zM338 630.5h3v2h-3zM342 630.5h7v2h-7zM354 630.5h3v2h-3zM358 630.5h3v2h-3zM362 630.5h7v2h-7zM370 630.5h7v2h-7zM386 630.5h7v2h-7zM394 630.5h7v2h-7zM406 630.5h3v2h-3zM410 630.5h3v2h-3zM414 630.5h7v2h-7zM422 628h3v2.5h-3zM422 630.5h3v2h-3zM426 630.5h3v2h-3zM430 630.5h3v2h-3zM434 630.5h3v2h-3zM438 630.5h3v2h-3zM446 628h3v2.5h-3zM446 630.5h3v2h-3zM450 630.5h3v2h-3zM454 630.5h3v2h-3zM458 630.5h3v2h-3zM462 630.5h3v2h-3zM470 630.5h3v2h-3zM474 630.5h3v2h-3zM478 630.5h3v2h-3zM482 630.5h3v2h-3zM486 630.5h3v2h-3zM490 630.5h3v2h-3zM494 630.5h3v2h-3zM498 630.5h3v2h-3zM502 630.5h3v2h-3zM506 630.5h3v2h-3zM510 630.5h3v2h-3zM514 630.5h3v2h-3zM518 630.5h3v2h-3zM522 630.5h3v2h-3zM526 630.5h3v2h-3zM530 628h3v2.5h-3zM534 630.5h3v2h-3zM375 455h3v2h-3zM375 486h3v2h-3zM375 514h3v2h-3zM375 552h3v2h-3z"/>
<path fill="#ff9a00" d="M262 469h3v2h-3zM270 469h3v2h-3zM278 469h3v2h-3zM282 469h3v2h-3zM290 469h7v2h-7zM302 469h3v2h-3zM306 467h7v2h-7zM306 469h7v2h-7zM322 469h3v2h-3zM326 469h3v2h-3zM330 469h3v2h-3zM334 469h3v2h-3zM338 469h3v2h-3zM342 467h3v2h-3zM342 469h3v2h-3zM350 469h3v2h-3zM354 469h3v2h-3zM358 467h7v2h-7zM358 469h7v2h-7zM374 467h3v2h-3zM374 469h3v2h-3zM378 469h3v2h-3zM382 469h3v2h-3zM386 469h3v2h-3zM390 469h3v2h-3zM394 469h3v2h-3zM398 469h3v2h-3zM402 467h3v2h-3zM402 469h3v2h-3zM406 469h3v2h-3zM410 469h7v2h-7zM418 469h3v2h-3zM422 467h3v2h-3zM422 469h3v2h-3zM426 469h3v2h-3zM434 467h3v2h-3zM434 469h3v2h-3zM438 467h3v2h-3zM438 469h3v2h-3zM446 467h3v2h-3zM446 469h3v2h-3zM450 469h3v2h-3zM454 469h3v2h-3zM458 469h3v2h-3zM462 469h3v2h-3zM466 469h3v2h-3zM470 469h7v2h-7zM478 469h3v2h-3zM482 469h3v2h-3zM486 469h3v2h-3zM490 469h3v2h-3zM494 469h3v2h-3zM498 469h3v2h-3zM502 467h3v2h-3zM502 469h3v2h-3zM510 467h3v2h-3zM510 469h3v2h-3zM514 467h3v2h-3zM514 469h3v2h-3zM522 469h7v2h-7zM530 469h3v2h-3zM534 469h3v2h-3zM266 506h3v3h-3zM270 506h3v3h-3zM274 506h3v3h-3zM278 506h3v3h-3zM282 506h3v3h-3zM294 506h3v3h-3zM302 506h3v3h-3zM314 506h3v3h-3zM318 506h7v3h-7zM326 506h3v3h-3zM330 506h3v3h-3zM334 506h3v3h-3zM338 506h3v3h-3zM350 506h3v3h-3zM354 506h3v3h-3zM358 506h3v3h-3zM362 506h7v3h-7zM370 506h3v3h-3zM374 506h3v3h-3zM378 506h3v3h-3zM382 506h3v3h-3zM386 506h3v3h-3zM390 506h3v3h-3zM394 506h3v3h-3zM398 506h3v3h-3zM402 506h3v3h-3zM406 506h3v3h-3zM410 506h3v3h-3zM414 506h3v3h-3zM418 506h3v3h-3zM422 506h3v3h-3zM426 506h3v3h-3zM434 506h3v3h-3zM442 506h3v3h-3zM446 506h3v3h-3zM450 506h3v3h-3zM454 506h3v3h-3zM458 506h3v3h-3zM462 506h3v3h-3zM466 506h7v3h-7zM474 506h3v3h-3zM478 506h3v3h-3zM482 506h7v3h-7zM490 506h3v3h-3zM494 506h3v3h-3zM498 506h3v3h-3zM502 506h3v3h-3zM506 506h3v3h-3zM522 506h3v3h-3zM526 506h3v3h-3zM530 506h3v3h-3zM534 506h3v3h-3zM262 594h3v2h-3zM270 592h3v2h-3zM270 594h3v2h-3zM274 594h3v2h-3zM278 594h3v2h-3zM282 594h3v2h-3zM286 594h3v2h-3zM298 594h3v2h-3zM302 592h3v2h-3zM302 594h3v2h-3zM306 594h3v2h-3zM314 592h3v2h-3zM318 594h3v2h-3zM322 594h3v2h-3zM326 594h3v2h-3zM330 594h7v2h-7zM346 592h3v2h-3zM346 594h3v2h-3zM350 594h3v2h-3zM358 594h3v2h-3zM362 594h3v2h-3zM366 594h3v2h-3zM370 594h3v2h-3zM374 594h3v2h-3zM378 594h3v2h-3zM382 594h3v2h-3zM386 594h3v2h-3zM394 594h3v2h-3zM398 592h3v2h-3zM398 594h3v2h-3zM402 594h3v2h-3zM406 594h3v2h-3zM410 594h3v2h-3zM418 594h3v2h-3zM422 594h3v2h-3zM426 594h3v2h-3zM434 594h3v2h-3zM438 592h3v2h-3zM438 594h3v2h-3zM442 594h3v2h-3zM446 592h3v2h-3zM450 594h3v2h-3zM454 594h3v2h-3zM458 594h3v2h-3zM462 594h3v2h-3zM466 592h7v2h-7zM466 594h7v2h-7zM474 594h3v2h-3zM478 592h3v2h-3zM478 594h3v2h-3zM482 594h3v2h-3zM486 594h3v2h-3zM490 594h3v2h-3zM494 592h3v2h-3zM494 594h3v2h-3zM498 594h3v2h-3zM502 594h3v2h-3zM506 594h3v2h-3zM510 594h3v2h-3zM514 594h3v2h-3zM518 592h3v2h-3zM518 594h3v2h-3zM522 594h3v2h-3zM526 594h3v2h-3zM534 594h3v2h-3zM262 632.5h3v2h-3zM266 632.5h3v2h-3zM270 632.5h3v2h-3zM278 632.5h3v2h-3zM282 632.5h3v2h-3zM290 632.5h3v2h-3zM294 632.5h3v2h-3zM298 630.5h3v2h-3zM298 632.5h3v2h-3zM306 632.5h3v2h-3zM310 630.5h3v2h-3zM314 632.5h3v2h-3zM318 632.5h3v2h-3zM322 632.5h3v2h-3zM326 630.5h3v2h-3zM326 632.5h3v2h-3zM330 632.5h7v2h-7zM342 632.5h7v2h-7zM350 630.5h3v2h-3zM350 632.5h3v2h-3zM354 632.5h3v2h-3zM358 632.5h3v2h-3zM362 632.5h7v2h-7zM370 632.5h7v2h-7zM378 630.5h7v2h-7zM386 632.5h7v2h-7zM394 632.5h7v2h-7zM402 630.5h3v2h-3zM402 632.5h3v2h-3zM406 632.5h3v2h-3zM410 632.5h3v2h-3zM414 632.5h7v2h-7zM426 632.5h3v2h-3zM434 632.5h3v2h-3zM438 632.5h3v2h-3zM442 630.5h3v2h-3zM442 632.5h3v2h-3zM446 632.5h3v2h-3zM450 632.5h3v2h-3zM454 632.5h3v2h-3zM462 632.5h3v2h-3zM466 630.5h3v2h-3zM466 632.5h3v2h-3zM470 632.5h3v2h-3zM474 632.5h3v2h-3zM478 632.5h3v2h-3zM490 632.5h3v2h-3zM494 632.5h3v2h-3zM498 632.5h3v2h-3zM510 632.5h3v2h-3zM514 632.5h3v2h-3zM518 632.5h3v2h-3zM522 632.5h3v2h-3zM530 630.5h3v2h-3zM530 632.5h3v2h-3zM509 526h3v2h-3zM509 528h3v2.5h-3zM517 528h3v2.5h-3zM525 528h3v2.5h-3zM529 528h3v2.5h-3zM537 528h3v2.5h-3zM375 455h3v12h-3zM375 486h3v18h-3zM375 514h3v21h-3zM375 552h3v15h-3z"/>
<path fill="#f01818" d="M262 471h3v3h-3zM266 469h3v2h-3zM266 471h3v3h-3zM270 471h3v3h-3zM274 469h3v2h-3zM278 471h3v3h-3zM282 471h3v3h-3zM286 469h3v2h-3zM286 471h3v3h-3zM298 469h3v2h-3zM298 471h3v3h-3zM302 471h3v3h-3zM314 469h7v2h-7zM314 471h7v3h-7zM322 471h3v3h-3zM326 471h3v3h-3zM330 471h3v3h-3zM334 471h3v3h-3zM342 471h3v3h-3zM346 469h3v2h-3zM350 471h3v3h-3zM354 471h3v3h-3zM358 471h7v3h-7zM366 469h3v2h-3zM366 471h3v3h-3zM370 469h3v2h-3zM374 471h3v3h-3zM378 471h3v3h-3zM382 471h3v3h-3zM386 471h3v3h-3zM390 471h3v3h-3zM398 471h3v3h-3zM402 471h3v3h-3zM406 471h3v3h-3zM410 471h7v3h-7zM418 471h3v3h-3zM422 471h3v3h-3zM426 471h3v3h-3zM430 469h3v2h-3zM430 471h3v3h-3zM438 471h3v3h-3zM442 469h3v2h-3zM442 471h3v3h-3zM446 471h3v3h-3zM450 471h3v3h-3zM454 471h3v3h-3zM458 471h3v3h-3zM462 471h3v3h-3zM466 471h3v3h-3zM482 471h3v3h-3zM486 471h3v3h-3zM490 471h3v3h-3zM494 471h3v3h-3zM498 471h3v3h-3zM502 471h3v3h-3zM506 469h3v2h-3zM506 471h3v3h-3zM510 471h3v3h-3zM514 471h3v3h-3zM518 469h3v2h-3zM518 471h3v3h-3zM522 471h7v3h-7zM530 471h3v3h-3zM534 471h3v3h-3zM262 596h3v2h-3zM266 594h3v2h-3zM266 596h3v2h-3zM274 596h3v2h-3zM278 596h3v2h-3zM286 596h3v2h-3zM290 594h3v2h-3zM290 596h3v2h-3zM294 594h3v2h-3zM298 596h3v2h-3zM302 596h3v2h-3zM306 596h3v2h-3zM310 594h3v2h-3zM310 596h3v2h-3zM314 594h3v2h-3zM314 596h3v2h-3zM318 596h3v2h-3zM322 596h3v2h-3zM326 596h3v2h-3zM338 594h3v2h-3zM338 596h3v2h-3zM342 594h3v2h-3zM342 596h3v2h-3zM346 596h3v2h-3zM350 596h3v2h-3zM354 594h3v2h-3zM354 596h3v2h-3zM358 596h3v2h-3zM370 596h3v2h-3zM382 596h3v2h-3zM386 596h3v2h-3zM390 594h3v2h-3zM390 596h3v2h-3zM394 596h3v2h-3zM402 596h3v2h-3zM410 596h3v2h-3zM414 594h3v2h-3zM414 596h3v2h-3zM418 596h3v2h-3zM422 596h3v2h-3zM426 596h3v2h-3zM430 594h3v2h-3zM430 596h3v2h-3zM434 596h3v2h-3zM438 596h3v2h-3zM442 596h3v2h-3zM446 594h3v2h-3zM446 596h3v2h-3zM450 596h3v2h-3zM458 596h3v2h-3zM462 596h3v2h-3zM466 596h7v2h-7zM478 596h3v2h-3zM482 596h3v2h-3zM486 596h3v2h-3zM490 596h3v2h-3zM494 596h3v2h-3zM502 596h3v2h-3zM506 596h3v2h-3zM510 596h3v2h-3zM514 596h3v2h-3zM518 596h3v2h-3zM526 596h3v2h-3zM530 594h3v2h-3zM530 596h3v2h-3zM262 634.5h3v2h-3zM266 634.5h3v2h-3zM274 632.5h3v2h-3zM274 634.5h3v2h-3zM286 632.5h3v2h-3zM286 634.5h3v2h-3zM290 634.5h3v2h-3zM294 634.5h3v2h-3zM298 634.5h3v2h-3zM302 632.5h3v2h-3zM302 634.5h3v2h-3zM306 634.5h3v2h-3zM310 632.5h3v2h-3zM314 634.5h3v2h-3zM318 634.5h3v2h-3zM322 634.5h3v2h-3zM326 634.5h3v2h-3zM330 634.5h7v2h-7zM338 632.5h3v2h-3zM338 634.5h3v2h-3zM350 634.5h3v2h-3zM354 634.5h3v2h-3zM362 634.5h7v2h-7zM370 634.5h7v2h-7zM378 632.5h7v2h-7zM378 634.5h7v2h-7zM402 634.5h3v2h-3zM410 634.5h3v2h-3zM414 634.5h7v2h-7zM422 632.5h3v2h-3zM422 634.5h3v2h-3zM426 634.5h3v2h-3zM430 632.5h3v2h-3zM430 634.5h3v2h-3zM434 634.5h3v2h-3zM438 634.5h3v2h-3zM446 634.5h3v2h-3zM450 634.5h3v2h-3zM454 634.5h3v2h-3zM458 632.5h3v2h-3zM458 634.5h3v2h-3zM462 634.5h3v2h-3zM470 634.5h3v2h-3zM474 634.5h3v2h-3zM478 634.5h3v2h-3zM482 632.5h3v2h-3zM482 634.5h3v2h-3zM486 632.5h3v2h-3zM486 634.5h3v2h-3zM490 634.5h3v2h-3zM494 634.5h3v2h-3zM498 634.5h3v2h-3zM502 632.5h3v2h-3zM502 634.5h3v2h-3zM506 632.5h3v2h-3zM506 634.5h3v2h-3zM510 634.5h3v2h-3zM514 634.5h3v2h-3zM518 634.5h3v2h-3zM522 634.5h3v2h-3zM526 632.5h3v2h-3zM526 634.5h3v2h-3zM530 634.5h3v2h-3zM534 632.5h3v2h-3zM505 528h3v2.5h-3zM513 526h3v2h-3zM513 528h3v2.5h-3zM517 526h3v2h-3zM521 526h3v2h-3zM529 526h3v2h-3zM533 526h3v2h-3zM533 528h3v2.5h-3zM375 458.6h3v5.4h-3zM375 491.4h3v8.1h-3zM375 520.3h3v9.5h-3zM375 556.5h3v6.8h-3z"/>
<path fill="#4a10e8" d="M262 476h3v2h-3zM270 476h3v2h-3zM274 476h3v2h-3zM330 476h3v2h-3zM358 476h7v2h-7zM394 476h3v2h-3zM402 476h3v2h-3zM406 476h3v2h-3zM426 476h3v2h-3zM442 476h3v2h-3zM466 476h3v2h-3zM470 476h7v2h-7zM482 476h3v2h-3zM518 476h3v2h-3zM262 598h3v2h-3zM262 600h3v2h-3zM266 600h3v2h-3zM270 600h3v2h-3zM274 600h3v2h-3zM278 598h3v2h-3zM278 600h3v2h-3zM282 600h3v2h-3zM286 600h3v2h-3zM290 598h3v2h-3zM290 600h3v2h-3zM294 600h3v2h-3zM298 600h3v2h-3zM302 600h3v2h-3zM310 600h3v2h-3zM314 598h3v2h-3zM314 600h3v2h-3zM318 598h3v2h-3zM318 600h3v2h-3zM322 598h3v2h-3zM322 600h3v2h-3zM326 600h3v2h-3zM338 600h3v2h-3zM342 600h3v2h-3zM346 600h3v2h-3zM354 600h3v2h-3zM358 600h3v2h-3zM362 598h3v2h-3zM362 600h3v2h-3zM366 598h3v2h-3zM370 600h3v2h-3zM374 600h3v2h-3zM378 598h3v2h-3zM378 600h3v2h-3zM382 600h3v2h-3zM386 598h3v2h-3zM386 600h3v2h-3zM390 598h3v2h-3zM394 600h3v2h-3zM402 600h3v2h-3zM406 600h3v2h-3zM410 600h3v2h-3zM418 600h3v2h-3zM422 600h3v2h-3zM426 600h3v2h-3zM430 598h3v2h-3zM430 600h3v2h-3zM438 598h3v2h-3zM442 600h3v2h-3zM446 600h3v2h-3zM450 600h3v2h-3zM458 598h3v2h-3zM458 600h3v2h-3zM462 600h3v2h-3zM466 600h7v2h-7zM478 600h3v2h-3zM482 600h3v2h-3zM486 600h3v2h-3zM490 600h3v2h-3zM494 600h3v2h-3zM498 600h3v2h-3zM502 600h3v2h-3zM510 600h3v2h-3zM514 598h3v2h-3zM514 600h3v2h-3zM518 600h3v2h-3zM522 600h3v2h-3zM530 598h3v2h-3zM534 600h3v2h-3zM262 638.5h3v2h-3zM266 636.5h3v2h-3zM266 638.5h3v2h-3zM270 638.5h3v2h-3zM274 638.5h3v2h-3zM278 638.5h3v2h-3zM282 638.5h3v2h-3zM286 636.5h3v2h-3zM286 638.5h3v2h-3zM290 638.5h3v2h-3zM298 638.5h3v2h-3zM302 638.5h3v2h-3zM306 638.5h3v2h-3zM310 638.5h3v2h-3zM314 638.5h3v2h-3zM318 638.5h3v2h-3zM322 638.5h3v2h-3zM326 636.5h3v2h-3zM326 638.5h3v2h-3zM338 638.5h3v2h-3zM342 638.5h7v2h-7zM354 636.5h3v2h-3zM354 638.5h3v2h-3zM358 638.5h3v2h-3zM370 638.5h7v2h-7zM378 638.5h7v2h-7zM386 638.5h7v2h-7zM394 636.5h7v2h-7zM394 638.5h7v2h-7zM402 638.5h3v2h-3zM406 638.5h3v2h-3zM414 638.5h7v2h-7zM422 638.5h3v2h-3zM426 638.5h3v2h-3zM430 636.5h3v2h-3zM434 638.5h3v2h-3zM438 636.5h3v2h-3zM438 638.5h3v2h-3zM442 638.5h3v2h-3zM450 638.5h3v2h-3zM454 636.5h3v2h-3zM454 638.5h3v2h-3zM458 638.5h3v2h-3zM462 638.5h3v2h-3zM466 636.5h3v2h-3zM466 638.5h3v2h-3zM470 638.5h3v2h-3zM474 638.5h3v2h-3zM478 638.5h3v2h-3zM482 638.5h3v2h-3zM486 638.5h3v2h-3zM494 636.5h3v2h-3zM494 638.5h3v2h-3zM498 638.5h3v2h-3zM502 638.5h3v2h-3zM506 638.5h3v2h-3zM510 638.5h3v2h-3zM514 638.5h3v2h-3zM518 638.5h3v2h-3zM522 638.5h3v2h-3zM526 638.5h3v2h-3zM530 636.5h3v2h-3zM530 638.5h3v2h-3z"/>
<path fill="#ffd000" d="M262 504h3v2h-3zM262 506h3v3h-3zM266 504h3v2h-3zM270 504h3v2h-3zM274 504h3v2h-3zM278 504h3v2h-3zM282 504h3v2h-3zM286 504h3v2h-3zM286 506h3v3h-3zM290 504h3v2h-3zM290 506h3v3h-3zM294 504h3v2h-3zM298 504h3v2h-3zM298 506h3v3h-3zM302 504h3v2h-3zM306 504h7v2h-7zM306 506h7v3h-7zM314 504h3v2h-3zM318 504h7v2h-7zM326 504h3v2h-3zM330 504h3v2h-3zM334 504h3v2h-3zM338 504h3v2h-3zM342 504h7v2h-7zM342 506h7v3h-7zM350 504h3v2h-3zM354 504h3v2h-3zM358 504h3v2h-3zM362 504h7v2h-7zM370 504h3v2h-3zM374 504h3v2h-3zM378 504h3v2h-3zM382 504h3v2h-3zM386 504h3v2h-3zM390 504h3v2h-3zM394 504h3v2h-3zM398 504h3v2h-3zM402 504h3v2h-3zM406 504h3v2h-3zM410 504h3v2h-3zM414 504h3v2h-3zM418 504h3v2h-3zM422 504h3v2h-3zM426 504h3v2h-3zM430 504h3v2h-3zM430 506h3v3h-3zM434 504h3v2h-3zM438 504h3v2h-3zM438 506h3v3h-3zM442 504h3v2h-3zM446 504h3v2h-3zM450 504h3v2h-3zM454 504h3v2h-3zM458 504h3v2h-3zM462 504h3v2h-3zM466 504h7v2h-7zM474 504h3v2h-3zM478 504h3v2h-3zM482 504h7v2h-7zM490 504h3v2h-3zM494 504h3v2h-3zM498 504h3v2h-3zM502 504h3v2h-3zM506 504h3v2h-3zM510 504h3v2h-3zM510 506h3v3h-3zM514 504h3v2h-3zM514 506h3v3h-3zM518 504h3v2h-3zM518 506h3v3h-3zM522 504h3v2h-3zM526 504h3v2h-3zM530 504h3v2h-3zM534 504h3v2h-3zM521 528h3v2.5h-3z"/>
<path fill="#2a0890" d="M262 602h3v2h-3zM266 602h3v2h-3zM270 602h3v2h-3zM274 602h3v2h-3zM278 602h3v2h-3zM282 602h3v2h-3zM286 602h3v2h-3zM290 602h3v2h-3zM294 602h3v2h-3zM298 602h3v2h-3zM302 602h3v2h-3zM306 602h3v2h-3zM310 602h3v2h-3zM314 602h3v2h-3zM318 602h3v2h-3zM322 602h3v2h-3zM326 602h3v2h-3zM330 602h7v2h-7zM338 602h3v2h-3zM342 602h3v2h-3zM346 602h3v2h-3zM350 602h3v2h-3zM354 602h3v2h-3zM358 602h3v2h-3zM362 602h3v2h-3zM366 602h3v2h-3zM370 602h3v2h-3zM374 602h3v2h-3zM378 602h3v2h-3zM382 602h3v2h-3zM386 602h3v2h-3zM390 602h3v2h-3zM394 602h3v2h-3zM398 602h3v2h-3zM402 602h3v2h-3zM406 602h3v2h-3zM410 602h3v2h-3zM414 602h3v2h-3zM418 602h3v2h-3zM422 602h3v2h-3zM426 602h3v2h-3zM430 602h3v2h-3zM434 602h3v2h-3zM438 602h3v2h-3zM442 602h3v2h-3zM446 602h3v2h-3zM450 602h3v2h-3zM454 602h3v2h-3zM458 602h3v2h-3zM462 602h3v2h-3zM466 602h7v2h-7zM474 602h3v2h-3zM478 602h3v2h-3zM482 602h3v2h-3zM486 602h3v2h-3zM490 602h3v2h-3zM494 602h3v2h-3zM498 602h3v2h-3zM502 602h3v2h-3zM506 602h3v2h-3zM510 602h3v2h-3zM514 602h3v2h-3zM518 602h3v2h-3zM522 602h3v2h-3zM526 602h3v2h-3zM530 602h3v2h-3zM534 602h3v2h-3zM262 640.5h3v1.5h-3zM266 640.5h3v1.5h-3zM270 640.5h3v1.5h-3zM274 640.5h3v1.5h-3zM278 640.5h3v1.5h-3zM282 640.5h3v1.5h-3zM286 640.5h3v1.5h-3zM290 640.5h3v1.5h-3zM294 640.5h3v1.5h-3zM298 640.5h3v1.5h-3zM302 640.5h3v1.5h-3zM306 640.5h3v1.5h-3zM310 640.5h3v1.5h-3zM314 640.5h3v1.5h-3zM318 640.5h3v1.5h-3zM322 640.5h3v1.5h-3zM326 640.5h3v1.5h-3zM330 640.5h7v1.5h-7zM338 640.5h3v1.5h-3zM342 640.5h7v1.5h-7zM350 640.5h3v1.5h-3zM354 640.5h3v1.5h-3zM358 640.5h3v1.5h-3zM362 640.5h7v1.5h-7zM370 640.5h7v1.5h-7zM378 640.5h7v1.5h-7zM386 640.5h7v1.5h-7zM394 640.5h7v1.5h-7zM402 640.5h3v1.5h-3zM406 640.5h3v1.5h-3zM410 640.5h3v1.5h-3zM414 640.5h7v1.5h-7zM422 640.5h3v1.5h-3zM426 640.5h3v1.5h-3zM430 640.5h3v1.5h-3zM434 640.5h3v1.5h-3zM438 640.5h3v1.5h-3zM442 640.5h3v1.5h-3zM446 640.5h3v1.5h-3zM450 640.5h3v1.5h-3zM454 640.5h3v1.5h-3zM458 640.5h3v1.5h-3zM462 640.5h3v1.5h-3zM466 640.5h3v1.5h-3zM470 640.5h3v1.5h-3zM474 640.5h3v1.5h-3zM478 640.5h3v1.5h-3zM482 640.5h3v1.5h-3zM486 640.5h3v1.5h-3zM490 640.5h3v1.5h-3zM494 640.5h3v1.5h-3zM498 640.5h3v1.5h-3zM502 640.5h3v1.5h-3zM506 640.5h3v1.5h-3zM510 640.5h3v1.5h-3zM514 640.5h3v1.5h-3zM518 640.5h3v1.5h-3zM522 640.5h3v1.5h-3zM526 640.5h3v1.5h-3zM530 640.5h3v1.5h-3zM534 640.5h3v1.5h-3z"/>
<path fill="#200a70" d="M306 600h3v2h-3zM330 600h7v2h-7zM350 600h3v2h-3zM366 600h3v2h-3zM390 600h3v2h-3zM398 600h3v2h-3zM414 600h3v2h-3zM434 600h3v2h-3zM438 600h3v2h-3zM454 600h3v2h-3zM474 600h3v2h-3zM506 600h3v2h-3zM526 600h3v2h-3zM530 600h3v2h-3zM294 638.5h3v2h-3zM330 638.5h7v2h-7zM350 638.5h3v2h-3zM362 638.5h7v2h-7zM410 638.5h3v2h-3zM430 638.5h3v2h-3zM446 638.5h3v2h-3zM490 638.5h3v2h-3zM534 638.5h3v2h-3z"/>
<path fill="#ffffff" d="M264 602.5h1v1h-1zM268 602.5h1v1h-1zM272 602.5h1v1h-1zM276 602.5h1v1h-1zM280 602.5h1v1h-1zM284 602.5h1v1h-1zM288 602.5h1v1h-1zM292 602.5h1v1h-1zM296 602.5h1v1h-1zM300 602.5h1v1h-1zM304 602.5h1v1h-1zM308 602.5h1v1h-1zM312 602.5h1v1h-1zM316 602.5h1v1h-1zM320 602.5h1v1h-1zM324 602.5h1v1h-1zM328 602.5h1v1h-1zM332 602.5h1v1h-1zM336 602.5h1v1h-1zM340 602.5h1v1h-1zM344 602.5h1v1h-1zM348 602.5h1v1h-1zM352 602.5h1v1h-1zM356 602.5h1v1h-1zM360 602.5h1v1h-1zM364 602.5h1v1h-1zM368 602.5h1v1h-1zM372 602.5h1v1h-1zM376 602.5h1v1h-1zM380 602.5h1v1h-1zM384 602.5h1v1h-1zM388 602.5h1v1h-1zM392 602.5h1v1h-1zM396 602.5h1v1h-1zM400 602.5h1v1h-1zM404 602.5h1v1h-1zM408 602.5h1v1h-1zM412 602.5h1v1h-1zM416 602.5h1v1h-1zM420 602.5h1v1h-1zM424 602.5h1v1h-1zM428 602.5h1v1h-1zM432 602.5h1v1h-1zM436 602.5h1v1h-1zM440 602.5h1v1h-1zM444 602.5h1v1h-1zM448 602.5h1v1h-1zM452 602.5h1v1h-1zM456 602.5h1v1h-1zM460 602.5h1v1h-1zM464 602.5h1v1h-1zM468 602.5h1v1h-1zM472 602.5h1v1h-1zM476 602.5h1v1h-1zM480 602.5h1v1h-1zM484 602.5h1v1h-1zM488 602.5h1v1h-1zM492 602.5h1v1h-1zM496 602.5h1v1h-1zM500 602.5h1v1h-1zM504 602.5h1v1h-1zM508 602.5h1v1h-1zM512 602.5h1v1h-1zM516 602.5h1v1h-1zM520 602.5h1v1h-1zM524 602.5h1v1h-1zM528 602.5h1v1h-1zM532 602.5h1v1h-1zM536 602.5h1v1h-1z"/>
<path fill="#ffc040" d="M262 583h3v3h-3zM270 583h3v3h-3zM274 583h3v3h-3zM278 583h3v3h-3zM282 583h3v3h-3zM286 583h3v3h-3zM294 583h3v3h-3zM298 583h3v3h-3z"/>
<path fill="#f5d860" d="M526 491h3v3h-3zM530 491h3v3h-3zM534 491h3v3h-3z"/>
 <circle cx="460.4" cy="468.6" r="4.6" fill="none" stroke="#ee0000" stroke-width="2"/>
 <g fill="#f5e050" stroke="#000" stroke-width="1.1">
  <path d="M393.5 537.5 l3 -3 l3 3 l-3 3 z M399 537.5 h6"/>
  <path d="M453.5 512.5 l3 -3 l3 3 l-3 3 z M459 512.5 h6"/>
  <path d="M461.5 529.5 l3 -3 l3 3 l-3 3 z M467 529.5 h6"/>
  <path d="M425.5 647.5 l3 -3 l3 3 l-3 3 z M431 647.5 h6"/>
  <path d="M517.5 656.5 l3 -3 l3 3 l-3 3 z M523 656.5 h6"/>
 </g>
 <path d="M260.5 437 V659 H538" fill="none" stroke="#000" stroke-width="1.3"/>
 <g stroke="#000"><path d="M258 447.5 H260 M258 469.5 H260 M258 491.5 H260 M258 513.5 H260 M258 535.5 H260 M258 557.5 H260 M258 580.5 H260 M258 602.5 H260 M258 624.5 H260 M258 646.5 H260"/>
 <path d="M272.5 659 V662 M297.5 659 V662 M322.5 659 V662 M348.5 659 V662 M373.5 659 V662 M398.5 659 V662 M424.5 659 V662 M449.5 659 V662 M474.5 659 V662 M500.5 659 V662 M525.5 659 V662"/></g>
 <g font-family="Liberation Sans" font-size="9.6" letter-spacing="0.55" text-anchor="end" fill="#111"><text x="257" y="448.7">680</text><text x="257" y="471.1">670</text><text x="257" y="492.9">660</text><text x="257" y="514.7">650</text><text x="257" y="536.9">640</text><text x="257" y="558.7">630</text><text x="257" y="581.8">620</text><text x="257" y="603.9">610</text><text x="257" y="647.9">590</text></g>
 <text x="256" y="626.7" font-family="Liberation Sans" font-size="10.8" letter-spacing="0.3" text-anchor="end" fill="#111">600</text>
 <g font-family="Liberation Sans" font-size="9" text-anchor="middle" fill="#111"><text x="273.1" y="668.7">1540</text><text x="298.1" y="668.7">1550</text><text x="323.1" y="668.7">1560</text><text x="349.1" y="668.7">1570</text><text x="374.1" y="668.7">1580</text><text x="399.1" y="668.7">1590</text><text x="450.1" y="668.7">1610</text><text x="475.1" y="668.7">1620</text><text x="501.1" y="668.7">1630</text><text x="526.1" y="668.7">1640</text></g>
 <text x="425.4" y="669.8" font-family="Liberation Sans" font-size="10.6" text-anchor="middle" fill="#111">1600</text>
 <text x="399" y="686.5" font-family="Liberation Sans" font-size="10.5" text-anchor="middle" fill="#111">RT [sec]</text>
 <text x="0" y="0" transform="translate(221 548) rotate(-90)" text-anchor="middle" font-family="Liberation Sans" font-size="11.5" letter-spacing="0.7" fill="#111">MZ [Th]</text>
</svg>
<div class="t mono" style="left:261px;top:440px;font-size:11.5px;line-height:14px;color:#555;background:rgba(255,255,255,0.7);padding:4px 3px 2px 4px;color:#6a6a6a">RT:&nbsp;&nbsp;1,614.45<br>m/z: 671.15089<br>Int: 2,718.96</div>

<!-- 2D vertical scrollbar -->
<div class="hatch" style="left:196px;top:452px;width:14px;height:176px"></div>
<div class="btn" style="left:195px;top:437px;width:16px;height:16px"></div>
<div class="btn" style="left:195px;top:551px;width:16px;height:26px"></div>
<div class="btn" style="left:195px;top:627px;width:16px;height:16px"></div>
<div class="btn" style="left:195px;top:643px;width:16px;height:16px"></div>
<svg class="a" style="left:195px;top:437px" width="16" height="222">
 <path d="M3.5 9.5 L7.5 5 L11.5 9.5 Z" fill="#000"/>
 <path d="M3.5 199.5 L7.5 195 L11.5 199.5 Z" fill="#000"/>
 <path d="M3.5 210.5 L7.5 215 L11.5 210.5 Z" fill="#000"/>
</svg>
<!-- 2D horizontal scrollbar -->
<div class="hatch" style="left:276px;top:690px;width:231px;height:14px"></div>
<div class="btn" style="left:261px;top:689px;width:16px;height:16px"></div>
<div class="btn" style="left:287px;top:689px;width:26px;height:16px"></div>
<div class="btn" style="left:506px;top:689px;width:16px;height:16px"></div>
<div class="btn" style="left:522px;top:689px;width:16px;height:16px"></div>
<svg class="a" style="left:261px;top:689px" width="278" height="16">
 <path d="M5 8 L9 4 V12 Z" fill="#000"/>
 <path d="M250 8 L254 4 V12 Z" fill="#000"/>
 <path d="M270 8 L266 4 V12 Z" fill="#000"/>
</svg>

<!-- projection m/z plot -->
<div class="a" style="left:589px;top:438px;width:199px;height:220px;background:#fff"></div>
<svg class="a" style="left:540px;top:430px" width="252" height="250" viewBox="540 430 252 250">
 <g stroke="#888" stroke-width="1" stroke-dasharray="1 2">
  <path d="M599.5 438 V658 M619.5 438 V658 M639.5 438 V658 M659.5 438 V658 M679.5 438 V658 M699.5 438 V658 M719.5 438 V658 M739.5 438 V658 M759.5 438 V658 M779.5 438 V658"/>
  <path d="M589 449.5 H788 M589 470.5 H788 M589 492.5 H788 M589 514.5 H788 M589 536.5 H788 M589 558.5 H788 M589 579.5 H788 M589 601.5 H788 M589 644.5 H788"/>
 </g>
 <g stroke="#666" stroke-width="1" stroke-dasharray="4 2">
  <path d="M609.5 438 V658 M629.5 438 V658 M649.5 438 V658 M669.5 438 V658 M689.5 438 V658 M709.5 438 V658 M729.5 438 V658 M749.5 438 V658 M769.5 438 V658"/>
  <path d="M589 623.5 H788"/>
 </g>
 <g stroke="#0000ff" stroke-width="1.1">
  <path d="M589 440.5 H643 M589 469.5 H595 M589 471.5 H603 M589 473.5 H608 M589 475.5 H619 M589 477.5 H653 M589 504.5 H591 M589 506.5 H594 M589 508.5 H599 M589 528.5 H591 M589 530.5 H593"/>
  <path d="M589 593.5 H595 M589 595.5 H605 M589 597.5 H644 M589 599.5 H682 M589 601.5 H779.5"/>
  <path d="M589 630.5 H598 M589 632.5 H614 M589 634.5 H648 M589 636.5 H689.5 M589 639.5 H788"/>
 </g>
 <g stroke="#0000ff" stroke-width="1.5"><path d="M589 452 H591 M589 458 H590.5 M589 462 H591 M589 466 H592 M589 483 H591 M589 490 H590.5 M589 495 H591 M589 500 H590.5 M589 520 H590.5 M589 525 H591 M589 534 H591 M589 545 H590.5 M589 560 H590.5 M589 575 H590.5 M589 585 H591 M589 590 H592 M589 605 H591 M589 608 H590.5 M589 618 H590.5 M589 625 H591 M589 627 H592 M589 643 H592 M589 648 H591 M589 652 H590.5"/></g>
 <path d="M588.5 438 V658.5 H788" fill="none" stroke="#000" stroke-width="1"/>
 <g stroke="#000"><path d="M586 449.5 H588 M586 470.5 H588 M586 492.5 H588 M586 514.5 H588 M586 536.5 H588 M586 558.5 H588 M586 579.5 H588 M586 601.5 H588 M586 623.5 H588 M586 644.5 H588"/>
 <path d="M599.5 658 V661 M609.5 658 V661 M619.5 658 V661 M629.5 658 V661 M639.5 658 V661 M649.5 658 V661 M659.5 658 V661 M669.5 658 V661 M679.5 658 V661 M689.5 658 V661 M699.5 658 V661 M709.5 658 V661 M719.5 658 V661 M729.5 658 V661 M739.5 658 V661 M749.5 658 V661 M759.5 658 V661 M769.5 658 V661 M779.5 658 V661"/></g>
 <g font-family="Liberation Sans" font-size="9.6" letter-spacing="0.55" text-anchor="end" fill="#111"><text x="584.5" y="450.6">680</text><text x="584.5" y="471.6">670</text><text x="584.5" y="493.6">660</text><text x="584.5" y="515.6">650</text><text x="584.5" y="537.6">640</text><text x="584.5" y="559.6">630</text><text x="584.5" y="580.6">620</text><text x="584.5" y="602.6">610</text><text x="584.5" y="645.6">590</text></g>
 <text x="583.5" y="625.7" font-family="Liberation Sans" font-size="10.8" letter-spacing="0.3" text-anchor="end" fill="#111">600</text>
 <g font-family="Liberation Sans" font-size="5.5" font-weight="bold" text-anchor="middle" fill="#111">
  <text x="599.5" y="667">5</text><text x="609.5" y="667">10</text><text x="619.5" y="667">15</text><text x="629.5" y="667">20</text><text x="639.5" y="667">25</text><text x="649.5" y="667">30</text><text x="659.5" y="667">35</text><text x="669.5" y="667">40</text><text x="679.5" y="667">45</text><text x="689.5" y="667">50</text><text x="699.5" y="667">55</text><text x="709.5" y="667">60</text><text x="719.5" y="667">65</text><text x="729.5" y="667">70</text><text x="739.5" y="667">75</text><text x="749.5" y="667">80</text><text x="759.5" y="667">85</text><text x="769.5" y="667">90</text><text x="779.5" y="667">95</text><text x="785.5" y="667">1</text>
 </g>
</svg>


<!-- right dock: Layers -->
<svg class="a" style="left:814px;top:105px" width="150" height="6" shape-rendering="crispEdges"><rect width="150" height="6" fill="url(#d6)"/></svg>
<svg class="a" style="left:1013px;top:105px" width="155" height="6" shape-rendering="crispEdges"><rect width="155" height="6" fill="url(#d6)"/></svg>
<div class="t" style="left:940px;top:103px;width:101px;text-align:center;font-size:11px;letter-spacing:0">Layers</div>
<div class="btn" style="left:1170px;top:101px;width:14px;height:14px"></div>
<div class="btn" style="left:1185px;top:101px;width:14px;height:14px"></div>
<svg class="a" style="left:1170px;top:101px" width="30" height="14">
 <rect x="5.5" y="2.5" width="5" height="4" fill="none" stroke="#000" stroke-width="1.2"/>
 <rect x="3.5" y="5.5" width="5" height="5" fill="#e8e5e0" stroke="#000" stroke-width="1.2"/>
 <path d="M18.5 3.5 L25.5 10.5 M25.5 3.5 L18.5 10.5" stroke="#000" stroke-width="1.5"/>
</svg>
<div class="a" style="left:810px;top:119px;width:390px;height:107px;background:#fff;border:1px solid #7d7973;box-shadow:inset 1px 1px 0 #a9a59f;border-radius:3px"></div>
<div class="a" style="left:811px;top:121px;width:388px;height:13px;background:#000080"></div>
<div class="a" style="left:815px;top:121px;width:13px;height:13px;background:#fff;border:1px solid #555"></div>
<svg class="a" style="left:815px;top:121px" width="13" height="13"><path d="M3.2 3.2 L9.8 9.8 M9.8 3.2 L3.2 9.8" stroke="#000" stroke-width="3"/></svg>
<div class="t" style="left:834px;top:122px;font-size:11.5px;color:#fff">BSA1.mzML</div>

<svg class="a" style="left:939px;top:228px" width="128" height="3" shape-rendering="crispEdges"><rect width="128" height="3" fill="url(#d5)"/></svg>

<!-- Views -->
<svg class="a" style="left:813px;top:238px" width="158" height="6" shape-rendering="crispEdges"><rect width="156" height="6" fill="url(#d6)"/></svg>
<svg class="a" style="left:1011px;top:238px" width="157" height="6" shape-rendering="crispEdges"><rect width="157" height="6" fill="url(#d6)"/></svg>
<div class="t" style="left:940px;top:236px;width:101px;text-align:center;font-size:10.8px;letter-spacing:0">Views</div>
<div class="btn" style="left:1170px;top:234px;width:14px;height:14px"></div>
<div class="btn" style="left:1185px;top:234px;width:14px;height:14px"></div>
<svg class="a" style="left:1170px;top:234px" width="30" height="14">
 <rect x="5.5" y="2.5" width="5" height="4" fill="none" stroke="#000" stroke-width="1.2"/>
 <rect x="3.5" y="5.5" width="5" height="5" fill="#e8e5e0" stroke="#000" stroke-width="1.2"/>
 <path d="M18.5 3.5 L25.5 10.5 M25.5 3.5 L18.5 10.5" stroke="#000" stroke-width="1.5"/>
</svg>
<svg class="a" style="left:806px;top:294px" width="3" height="204" shape-rendering="crispEdges"><rect width="3" height="204" fill="url(#d5)"/></svg>
<!-- tab frame -->
<div class="a" style="left:810px;top:271px;width:389px;height:180px;border:1px solid #8f8b85;border-radius:0 3px 3px 3px"></div>
<div class="a" style="left:890px;top:255px;width:125px;height:17px;border:1px solid #8f8b85;border-bottom:none;border-radius:3px 3px 0 0;background:linear-gradient(#e6e3de,#d0ccc6)"></div>
<div class="t" style="left:890px;top:257px;width:125px;text-align:center;font-size:11.5px;color:#7f7b76;text-shadow:1px 1px 0 #fff">Identification view</div>
<div class="a" style="left:810px;top:252px;width:81px;height:21px;border:1px solid #8f8b85;border-bottom:none;border-radius:3px 3px 0 0;background:#d5d0ca"></div>
<div class="t" style="left:822px;top:256px;font-size:11.5px">Scan view</div>

<!-- table -->
<div class="a" style="left:821px;top:282px;width:367px;height:130px;border:1px solid #7d7973;box-shadow:inset 1px 1px 0 #a9a59f;border-radius:3px;background:#fff"></div>
<div class="a" style="left:823px;top:284px;width:348px;height:21px;background:linear-gradient(#eceae6,#d8d4ce)"></div>
<svg class="a" style="left:821px;top:282px" width="368" height="131" viewBox="821 282 368 131">
 <g stroke="#a09c96" stroke-width="2"><path d="M888 285 V304 M933 285 V304 M983 285 V304 M1038 285 V304 M1093 285 V304 M1138 285 V304"/></g>
 <path d="M823 304.5 H1171" stroke="#a09c96"/>
</svg>
<div class="a" style="left:823px;top:305px;width:348px;height:13px;background:#000080"></div>
<div class="t" style="left:827px;top:289px;font-size:11.5px">MS level</div>
<div class="t" style="left:892px;top:289px;font-size:11.5px">index</div>
<div class="t" style="left:937px;top:289px;font-size:11.5px">RT</div>
<div class="t" style="left:987px;top:289px;font-size:11.5px;width:50px;overflow:hidden">precursor</div>
<div class="t" style="left:1042px;top:289px;font-size:11.5px;width:50px;overflow:hidden">dissocia</div>
<div class="t" style="left:1097px;top:289px;font-size:11.5px;width:40px;overflow:hidden">scan type</div>
<div class="t" style="left:1142px;top:289px;font-size:11.5px;width:29px;overflow:hidden">zoom</div>
<div class="a" style="left:823px;top:305px;width:348px;height:91px;font-size:11.5px;overflow:hidden">
 <svg class="a" style="left:0;top:0" width="40" height="91" viewBox="823 305 40 91">
  <path d="M833.5 305 V396" stroke="#888" stroke-dasharray="1 1"/>
  <g stroke="#888" stroke-dasharray="1 1"><path d="M834 311.5 H843 M838 324.5 H843 M834 337.5 H843 M834 350.5 H843 M838 363.5 H843 M838 376.5 H843 M834 389.5 H843"/></g>
  <g fill="#fff" stroke="#8a8a8a"><rect x="828.5" y="320.5" width="8" height="8"/><rect x="828.5" y="359.5" width="8" height="8"/><rect x="828.5" y="372.5" width="8" height="8"/></g>
  <g stroke="#333"><path d="M830.5 324.5 H835 M832.5 322 V327 M830.5 363.5 H835 M832.5 361 V366 M830.5 376.5 H835 M832.5 374 V379"/></g>
 </svg>
</div>
<div class="t" style="left:846px;top:306px;font-size:11.5px;color:#fff">MS1</div><div class="t" style="left:892px;top:306px;font-size:11.5px;color:#fff">0</div><div class="t" style="left:936px;top:306px;font-size:11.5px;color:#fff">1501....</div><div class="t" style="left:988px;top:306px;font-size:11.5px;color:#fff">-</div><div class="t" style="left:1042px;top:306px;font-size:11.5px;color:#fff">-</div><div class="t" style="left:1097px;top:306px;font-size:11.5px;color:#fff">Mas...</div><div class="t" style="left:1142px;top:306px;font-size:11.5px;color:#fff">no</div>
<div class="t" style="left:846px;top:319px;font-size:11.5px;color:#000">MS1</div><div class="t" style="left:892px;top:319px;font-size:11.5px;color:#000">1</div><div class="t" style="left:936px;top:319px;font-size:11.5px;color:#000">1503....</div><div class="t" style="left:988px;top:319px;font-size:11.5px;color:#000">-</div><div class="t" style="left:1042px;top:319px;font-size:11.5px;color:#000">-</div><div class="t" style="left:1097px;top:319px;font-size:11.5px;color:#000">Mas...</div><div class="t" style="left:1142px;top:319px;font-size:11.5px;color:#000">no</div>
<div class="t" style="left:846px;top:332px;font-size:11.5px;color:#000">MS1</div><div class="t" style="left:892px;top:332px;font-size:11.5px;color:#000">3</div><div class="t" style="left:936px;top:332px;font-size:11.5px;color:#000">1504....</div><div class="t" style="left:988px;top:332px;font-size:11.5px;color:#000">-</div><div class="t" style="left:1042px;top:332px;font-size:11.5px;color:#000">-</div><div class="t" style="left:1097px;top:332px;font-size:11.5px;color:#000">Mas...</div><div class="t" style="left:1142px;top:332px;font-size:11.5px;color:#000">no</div>
<div class="t" style="left:846px;top:345px;font-size:11.5px;color:#000">MS1</div><div class="t" style="left:892px;top:345px;font-size:11.5px;color:#000">4</div><div class="t" style="left:936px;top:345px;font-size:11.5px;color:#000">1506.1</div><div class="t" style="left:988px;top:345px;font-size:11.5px;color:#000">-</div><div class="t" style="left:1042px;top:345px;font-size:11.5px;color:#000">-</div><div class="t" style="left:1097px;top:345px;font-size:11.5px;color:#000">Mas...</div><div class="t" style="left:1142px;top:345px;font-size:11.5px;color:#000">no</div>
<div class="t" style="left:846px;top:358px;font-size:11.5px;color:#000">MS1</div><div class="t" style="left:892px;top:358px;font-size:11.5px;color:#000">5</div><div class="t" style="left:936px;top:358px;font-size:11.5px;color:#000">1507....</div><div class="t" style="left:988px;top:358px;font-size:11.5px;color:#000">-</div><div class="t" style="left:1042px;top:358px;font-size:11.5px;color:#000">-</div><div class="t" style="left:1097px;top:358px;font-size:11.5px;color:#000">Mas...</div><div class="t" style="left:1142px;top:358px;font-size:11.5px;color:#000">no</div>
<div class="t" style="left:846px;top:371px;font-size:11.5px;color:#000">MS1</div><div class="t" style="left:892px;top:371px;font-size:11.5px;color:#000">8</div><div class="t" style="left:936px;top:371px;font-size:11.5px;color:#000">1509....</div><div class="t" style="left:988px;top:371px;font-size:11.5px;color:#000">-</div><div class="t" style="left:1042px;top:371px;font-size:11.5px;color:#000">-</div><div class="t" style="left:1097px;top:371px;font-size:11.5px;color:#000">Mas...</div><div class="t" style="left:1142px;top:371px;font-size:11.5px;color:#000">no</div>
<div class="t" style="left:846px;top:384px;font-size:11.5px;color:#000">MS1</div><div class="t" style="left:892px;top:384px;font-size:11.5px;color:#000">10</div><div class="t" style="left:936px;top:384px;font-size:11.5px;color:#000">1510....</div><div class="t" style="left:988px;top:384px;font-size:11.5px;color:#000">-</div><div class="t" style="left:1042px;top:384px;font-size:11.5px;color:#000">-</div><div class="t" style="left:1097px;top:384px;font-size:11.5px;color:#000">Mas...</div><div class="t" style="left:1142px;top:384px;font-size:11.5px;color:#000">no</div>

<!-- table scrollbars -->
<div class="hatch" style="left:1172px;top:299px;width:14px;height:65px"></div>
<div class="btn" style="left:1172px;top:285px;width:15px;height:15px"></div>
<div class="btn" style="left:1172px;top:300px;width:15px;height:26px"></div>
<div class="btn" style="left:1172px;top:364px;width:15px;height:15px"></div>
<div class="btn" style="left:1172px;top:379px;width:15px;height:15px"></div>
<svg class="a" style="left:1172px;top:285px" width="15" height="110">
 <path d="M4 9.5 L7.5 6 L11 9.5 Z" fill="#000"/>
 <path d="M4 88.5 L7.5 85 L11 88.5 Z" fill="#000"/>
 <path d="M4 99 L7.5 102.5 L11 99 Z" fill="#000"/>
</svg>
<div class="a" style="left:1171px;top:396px;width:16px;height:15px;background:#d5d0ca"></div>
<div class="hatch" style="left:1128px;top:397px;width:12px;height:14px"></div>
<div class="btn" style="left:823px;top:396px;width:16px;height:15px"></div>
<div class="btn" style="left:838px;top:396px;width:291px;height:15px"></div>
<svg class="a" style="left:975px;top:398px" width="12" height="12" shape-rendering="crispEdges"><rect width="12" height="12" fill="url(#d4)"/></svg>
<div class="btn" style="left:1140px;top:396px;width:15px;height:15px"></div>
<div class="btn" style="left:1155px;top:396px;width:15px;height:15px"></div>
<svg class="a" style="left:823px;top:396px" width="350" height="15">
 <path d="M5 7.5 L9 4 V11 Z" fill="#000"/>
 <path d="M321 7.5 L325 4 V11 Z" fill="#000"/>
 <path d="M340 7.5 L336 4 V11 Z" fill="#000"/>
</svg>
<!-- filter line edit + combo -->
<div class="a" style="left:821px;top:420px;width:265px;height:20px;background:#fff;border:1px solid #7d7973;box-shadow:inset 1px 1px 0 #c0bcb6;border-radius:3px"></div>
<div class="btn" style="left:1093px;top:420px;width:96px;height:20px"></div>
<div class="a" style="left:1172px;top:421px;width:1px;height:18px;background:#a09c96"></div>
<div class="t" style="left:1098px;top:424px;font-size:11.5px">index</div>
<svg class="a" style="left:1173px;top:420px" width="16" height="20"><path d="M4 8 L8 12 L12 8 Z" fill="#000"/></svg>

<svg class="a" style="left:939px;top:453px" width="128" height="3" shape-rendering="crispEdges"><rect width="128" height="3" fill="url(#d5)"/></svg>

<!-- Data filters -->
<svg class="a" style="left:814px;top:463px" width="140" height="6" shape-rendering="crispEdges"><rect width="140" height="6" fill="url(#d6)"/></svg>
<svg class="a" style="left:1026px;top:463px" width="142" height="6" shape-rendering="crispEdges"><rect width="142" height="6" fill="url(#d6)"/></svg>
<div class="t" style="left:940px;top:461px;width:101px;text-align:center;font-size:11px;letter-spacing:-0.1px">Data filters</div>
<div class="btn" style="left:1170px;top:459px;width:14px;height:14px"></div>
<div class="btn" style="left:1185px;top:459px;width:14px;height:14px"></div>
<svg class="a" style="left:1170px;top:459px" width="30" height="14">
 <rect x="5.5" y="2.5" width="5" height="4" fill="none" stroke="#000" stroke-width="1.2"/>
 <rect x="3.5" y="5.5" width="5" height="5" fill="#e8e5e0" stroke="#000" stroke-width="1.2"/>
 <path d="M18.5 3.5 L25.5 10.5 M25.5 3.5 L18.5 10.5" stroke="#000" stroke-width="1.5"/>
</svg>
<div class="a" style="left:819px;top:486px;width:372px;height:200px;background:#fff;border:1px solid #7d7973;box-shadow:inset 1px 1px 0 #b0aca6;border-radius:3px"></div>
<div class="a" style="left:819px;top:694px;width:13px;height:13px;background:linear-gradient(#fff,#eee);border:1px solid #8f8b85;border-radius:2px"></div>
<div class="t" style="left:837px;top:694px;font-size:11.5px">Enable all filters</div>

<!-- status bar -->
<div class="a" style="left:1px;top:721px;width:981px;height:15px;border:1px solid #a09c96;border-radius:2px"></div>
<div class="a" style="left:984px;top:721px;width:80px;height:15px;border:1px solid #a09c96;border-radius:2px"></div>
<div class="a" style="left:1066px;top:721px;width:116px;height:15px;border:1px solid #a09c96;border-radius:2px"></div>
<div class="t" style="left:986px;top:723px;font-size:11.5px">RT:</div>
<div class="t" style="left:1068px;top:723px;font-size:11.5px">m/z:<span style="margin-left:5.5px">1642.690545</span></div>
<svg class="a" style="left:1185px;top:722px" width="15" height="15"><path d="M14 3 L3 14 M14 7 L7 14 M14 11 L11 14" stroke="#8f8b85" stroke-width="1.2"/><path d="M14 4.2 L4.2 14 M14 8.2 L8.2 14 M14 12.2 L12.2 14" stroke="#fff" stroke-width="0.8"/></svg>

</body></html>
